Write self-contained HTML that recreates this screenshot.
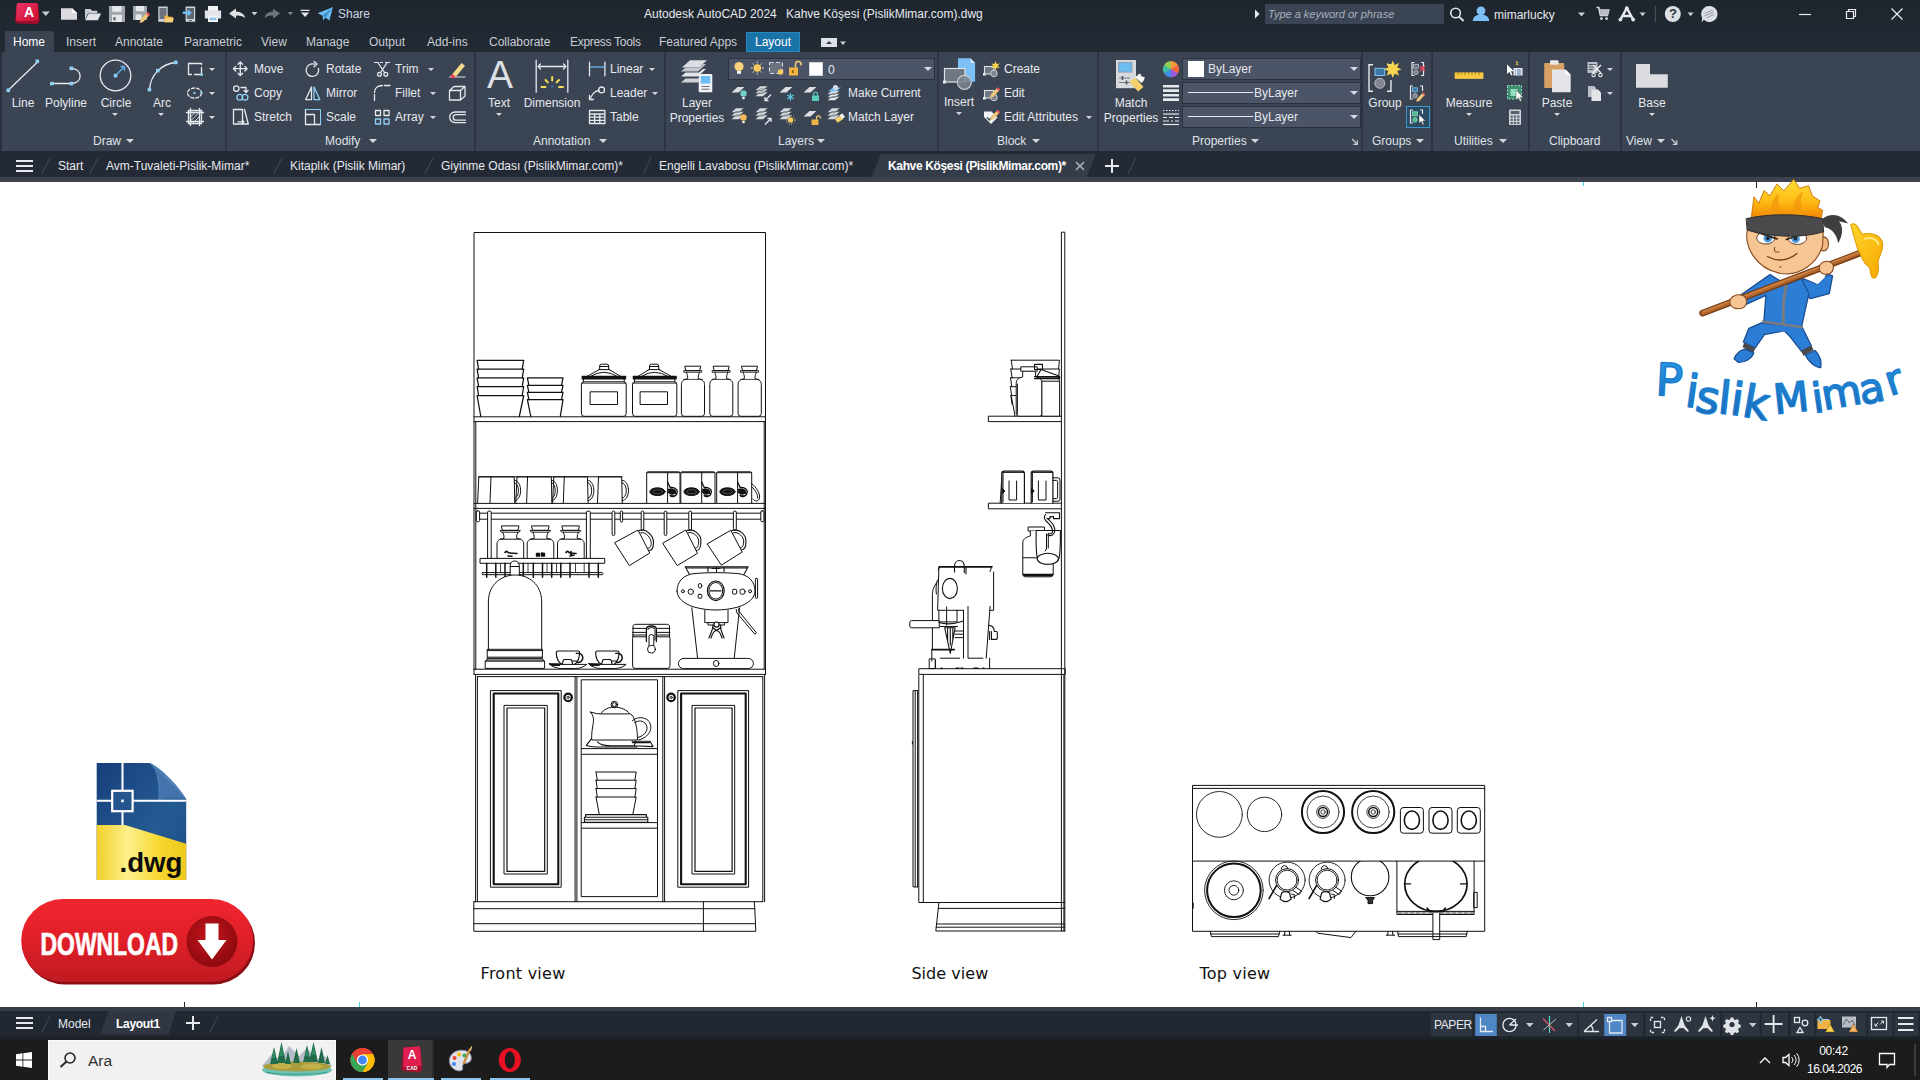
<!DOCTYPE html>
<html lang="en"><head><meta charset="utf-8"><title>Autodesk AutoCAD 2024 - Kahve Köşesi (PislikMimar.com).dwg</title>
<style>
*{box-sizing:border-box;margin:0;padding:0}
html,body{width:1920px;height:1080px;overflow:hidden;background:#fff;font-family:"Liberation Sans",sans-serif;}
#app{position:absolute;left:0;top:0;width:1920px;height:1080px;overflow:hidden;background:#fff}
.abs{position:absolute}
.t{position:absolute;white-space:nowrap;font-size:12px;line-height:14px;color:#e6e9ee;letter-spacing:0}
.tc{transform:translateX(-50%);text-align:center}
#title{position:absolute;left:0;top:0;width:1920px;height:52px;background:linear-gradient(#1e252d,#222a34)}
#ribbon{position:absolute;left:1px;top:52px;width:1919px;height:99px;background:#3b4453}
.sep{position:absolute;top:52px;width:2px;height:99px;background:#2d3542}
.pt{position:absolute;top:134px;font-size:12px;line-height:14px;color:#dfe3e8;white-space:nowrap}
.dd{position:absolute;width:0;height:0;border-left:4px solid transparent;border-right:4px solid transparent;border-top:4px solid #d5d9df}
.dds{position:absolute;width:0;height:0;border-left:3px solid transparent;border-right:3px solid transparent;border-top:3px solid #d5d9df}
.combo{position:absolute;background:#4b5567;border:1px solid #2a323f;height:21px}
#ftabs{position:absolute;left:0;top:151px;width:1920px;height:27px;background:#232a35}
#ftline{position:absolute;left:0;top:177px;width:1920px;height:5px;background:#3c434e}
#canvas{position:absolute;left:0;top:182px;width:1920px;height:825px;background:#fff}
#status{position:absolute;left:0;top:1007px;width:1920px;height:33px;background:#212832;border-top:4px solid #363d48}
#taskbar{position:absolute;left:0;top:1040px;width:1920px;height:40px;background:#1c1c1c}
svg{position:absolute;left:0;top:0;overflow:visible}
</style></head><body><div id="app">
<div id="title"></div>
<div class="abs" style="left:5px;top:31px;width:49px;height:21px;background:#3b4453;border-radius:2px 2px 0 0"></div>
<div class="abs" style="left:746px;top:32px;width:54px;height:20px;background:#1a73a7;border:1px solid #2688be"></div>
<div class="t" style="left:13px;top:35px;color:#fff">Home</div>
<div class="t" style="left:66px;top:35px;color:#c9cdd4">Insert</div>
<div class="t" style="left:115px;top:35px;color:#c9cdd4">Annotate</div>
<div class="t" style="left:184px;top:35px;color:#c9cdd4">Parametric</div>
<div class="t" style="left:261px;top:35px;color:#c9cdd4">View</div>
<div class="t" style="left:306px;top:35px;color:#c9cdd4">Manage</div>
<div class="t" style="left:369px;top:35px;color:#c9cdd4">Output</div>
<div class="t" style="left:427px;top:35px;color:#c9cdd4">Add-ins</div>
<div class="t" style="left:489px;top:35px;color:#c9cdd4">Collaborate</div>
<div class="t" style="left:570px;top:35px;color:#c9cdd4;letter-spacing:-0.3px">Express Tools</div>
<div class="t" style="left:659px;top:35px;color:#c9cdd4">Featured Apps</div>
<div class="t" style="left:755px;top:35px;color:#fff">Layout</div>
<div class="t" style="left:644px;top:7px;color:#e6e9ee">Autodesk AutoCAD 2024</div>
<div class="t" style="left:786px;top:7px;color:#e6e9ee">Kahve Köşesi (PislikMimar.com).dwg</div>
<div class="t" style="left:338px;top:7px;color:#cfd8e6">Share</div>
<div class="abs" style="left:1265px;top:4px;width:179px;height:20px;background:#3b4453"></div>
<div class="t" style="left:1268px;top:7px;color:#a9b0bb;font-style:italic;font-size:11px">Type a keyword or phrase</div>
<div class="t" style="left:1494px;top:8px;color:#e6e9ee">mimarlucky</div>
<div id="ribbon"></div>
<div class="abs" style="left:0;top:52px;width:2px;height:99px;background:#2a313d"></div>
<div class="sep" style="left:225px"></div><div class="sep" style="left:474px"></div><div class="sep" style="left:664px"></div>
<div class="sep" style="left:937px"></div><div class="sep" style="left:1097px"></div><div class="sep" style="left:1361px"></div>
<div class="sep" style="left:1431px"></div><div class="sep" style="left:1528px"></div><div class="sep" style="left:1620px"></div>
<!-- Draw -->
<div class="t tc" style="left:23px;top:96px">Line</div>
<div class="t tc" style="left:66px;top:96px">Polyline</div>
<div class="t tc" style="left:116px;top:96px">Circle</div>
<div class="t tc" style="left:162px;top:96px">Arc</div>
<div class="dds" style="left:112px;top:113px"></div><div class="dds" style="left:158px;top:113px"></div>
<div class="dds" style="left:209px;top:68px"></div><div class="dds" style="left:209px;top:92px"></div><div class="dds" style="left:209px;top:116px"></div>
<div class="pt" style="left:93px">Draw</div><div class="dd" style="left:126px;top:139px"></div>
<!-- Modify -->
<div class="t" style="left:254px;top:62px">Move</div><div class="t" style="left:254px;top:86px">Copy</div><div class="t" style="left:254px;top:110px">Stretch</div>
<div class="t" style="left:326px;top:62px">Rotate</div><div class="t" style="left:326px;top:86px">Mirror</div><div class="t" style="left:326px;top:110px">Scale</div>
<div class="t" style="left:395px;top:62px">Trim</div><div class="t" style="left:395px;top:86px">Fillet</div><div class="t" style="left:395px;top:110px">Array</div>
<div class="dds" style="left:428px;top:68px"></div><div class="dds" style="left:430px;top:92px"></div><div class="dds" style="left:430px;top:116px"></div>
<div class="pt" style="left:325px">Modify</div><div class="dd" style="left:369px;top:139px"></div>
<!-- Annotation -->
<div class="t tc" style="left:499px;top:96px">Text</div><div class="dds" style="left:496px;top:113px"></div>
<div class="t tc" style="left:552px;top:96px">Dimension</div>
<div class="t" style="left:610px;top:62px">Linear</div><div class="t" style="left:610px;top:86px">Leader</div><div class="t" style="left:610px;top:110px">Table</div>
<div class="dds" style="left:649px;top:68px"></div><div class="dds" style="left:652px;top:92px"></div>
<div class="pt" style="left:533px">Annotation</div><div class="dd" style="left:599px;top:139px"></div>
<!-- Layers -->
<div class="t tc" style="left:697px;top:96px">Layer</div><div class="t tc" style="left:697px;top:111px">Properties</div>
<div class="combo" style="left:728px;top:58px;width:207px;height:22px"></div>
<div class="abs" style="left:809px;top:62px;width:14px;height:14px;background:#fff;border:1px solid #cfd3d9"></div>
<div class="t" style="left:828px;top:63px">0</div><div class="dd" style="left:924px;top:67px"></div>
<div class="t" style="left:848px;top:86px">Make Current</div><div class="t" style="left:848px;top:110px">Match Layer</div>
<div class="pt" style="left:778px">Layers</div><div class="dd" style="left:817px;top:139px"></div>
<!-- Block -->
<div class="t tc" style="left:959px;top:95px">Insert</div><div class="dds" style="left:956px;top:112px"></div>
<div class="t" style="left:1004px;top:62px">Create</div><div class="t" style="left:1004px;top:86px">Edit</div><div class="t" style="left:1004px;top:110px">Edit Attributes</div>
<div class="dds" style="left:1086px;top:116px"></div>
<div class="pt" style="left:997px">Block</div><div class="dd" style="left:1032px;top:139px"></div>
<!-- Properties -->
<div class="t tc" style="left:1131px;top:96px">Match</div><div class="t tc" style="left:1131px;top:111px">Properties</div>
<div class="combo" style="left:1182px;top:58px;width:179px;height:22px"></div><div class="combo" style="left:1182px;top:82px;width:179px;height:22px"></div><div class="combo" style="left:1182px;top:106px;width:179px;height:22px"></div>
<div class="abs" style="left:1188px;top:61px;width:16px;height:16px;background:#fff"></div>
<div class="t" style="left:1208px;top:62px">ByLayer</div><div class="t" style="left:1254px;top:86px">ByLayer</div><div class="t" style="left:1254px;top:110px">ByLayer</div>
<div class="abs" style="left:1188px;top:92px;width:65px;height:1px;background:#e6e9ee"></div><div class="abs" style="left:1188px;top:116px;width:65px;height:1px;background:#e6e9ee"></div>
<div class="dd" style="left:1350px;top:67px"></div><div class="dd" style="left:1350px;top:91px"></div><div class="dd" style="left:1350px;top:115px"></div>
<div class="pt" style="left:1192px">Properties</div><div class="dd" style="left:1251px;top:139px"></div>
<!-- Groups -->
<div class="t tc" style="left:1385px;top:96px">Group</div>
<div class="abs" style="left:1406px;top:106px;width:24px;height:22px;background:#2b4a63;border:1px solid #3d96c8"></div>
<div class="pt" style="left:1372px">Groups</div><div class="dd" style="left:1416px;top:139px"></div>
<!-- Utilities -->
<div class="t tc" style="left:1469px;top:96px">Measure</div><div class="dds" style="left:1466px;top:113px"></div>
<div class="pt" style="left:1454px">Utilities</div><div class="dd" style="left:1499px;top:139px"></div>
<!-- Clipboard -->
<div class="t tc" style="left:1557px;top:96px">Paste</div><div class="dds" style="left:1554px;top:113px"></div>
<div class="dds" style="left:1607px;top:68px"></div><div class="dds" style="left:1607px;top:92px"></div>
<div class="pt" style="left:1549px">Clipboard</div>
<!-- View -->
<div class="t tc" style="left:1652px;top:96px">Base</div><div class="dds" style="left:1649px;top:113px"></div>
<div class="pt" style="left:1626px">View</div><div class="dd" style="left:1657px;top:139px"></div>
<svg width="1920" height="181" viewBox="0 0 1920 181">
<defs>
<linearGradient id="alogo" x1="0" y1="0" x2="1" y2="1"><stop offset="0" stop-color="#f0336a"/><stop offset="1" stop-color="#c8102e"/></linearGradient>
</defs>
<!-- ===== title bar / QAT ===== -->
<g>
  <path d="M16.500 5.500L19 3.200H36.500Q38.200 3.200 38.300 5L39.600 21.200L37.500 24.200L17 23.600L15 21.500Z" fill="#9c0e2c"/>
 <path d="M16.600 5Q16.700 3.100 18.600 3.100H35.800Q37.600 3.100 37.700 4.900L38.400 19.400Q38.500 21 36.800 21H17.600Q16 21 16.100 19.400Z" fill="url(#alogo)"/>
 <path d="M41.8 11.5h8l-4 4.5z" fill="#c9cdd4"/>
 <path d="M61 8.3h11.2l4.8 4.6v6.9H61z" fill="#d9dbe0"/><path d="M72.2 8.3v4.6H77z" fill="#fff"/>
 <path d="M85 9h5.5l1.6 1.8h5.2v2.4H88l-3 6.6z" fill="#c9ccd2"/><path d="M88.6 13.6h12.6l-3.4 6.6H85.2z" fill="#e1e3e7"/>
 <path d="M109 6h16v16h-16z" fill="#a1a5ad"/><path d="M112.2 6h9.4v5.8h-9.4z" fill="#e6e8ec"/><path d="M112 14.8h10v7.2h-10z" fill="#e6e8ec"/><path d="M113.5 17h2v3.4h-2z" fill="#555b66"/>
 <path d="M133 6h14v14h-14z" fill="#a1a5ad"/><path d="M135.8 6h8.4v5.2h-8.4z" fill="#e6e8ec"/><path d="M135.6 14.5h6v5.5h-6z" fill="#e6e8ec"/>
 <path d="M140.5 19.5l6.5-7 2.6 2.4-6.6 7-3.4 1z" fill="#f2c879"/><path d="M146 13.5l1.6-1.7 2.6 2.4-1.6 1.7z" fill="#e84b5f"/>
 <path d="M158.3 6.5h9.4v15.3h-9.4z" fill="#cfd2d8"/><path d="M159.5 8h7v11h-7z" fill="#6d727c"/>
 <path d="M164.5 15.5h3.2l1 1.2h4v5.6h-8.2z" fill="#f0b243"/><path d="M165.8 18h8l-1.2 4.3h-8.1z" fill="#f8cf7a"/>
 <path d="M185.6 6.5h9.6v15.3h-9.6z" fill="#cfd2d8"/><path d="M186.8 8h7.2v11h-7.2z" fill="#5f6671"/><path d="M189 20h3v.9h-3z" fill="#555"/>
 <path d="M182.8 11.6h5v-2.4l4 3.6-4 3.6V14h-5z" fill="#6bbdf2"/>
 <path d="M208 6h10v5h-10z" fill="#f0f1f3"/><path d="M204.8 10.5h16.3v8h-16.3z" fill="#e2e4e8"/><path d="M208 15.5h10v6.5h-10z" fill="#f4f5f7"/><path d="M209.6 17.6h6.8v2.6h-6.8z" fill="#8dc4ee"/>
 <path d="M229 13.4l7-5v3c5 .2 8.6 2.6 9.2 6.8-2-2-4.8-2.8-9.2-2.6v3z" fill="#e1e3e7"/>
 <path d="M251.5 12h6l-3 3.4z" fill="#c9cdd4"/>
 <path d="M280 13.4l-7-5v3c-5 .2-8 2.6-8.2 6.8 1.8-2 4.2-2.8 8.2-2.6v3z" fill="#6e747e"/>
 <path d="M287.6 12h5.6l-2.8 3.2z" fill="#7d838d"/>
 <path d="M300.6 9.8h9v1.3h-9zM301 12.6h8.2l-4.1 4.4z" fill="#e1e3e7"/>
 <path d="M317.6 13.2L333 7l-3.6 13.6-4-3.2-2.2 3.2-.6-4.8z" fill="#6bbdf2"/><path d="M322.6 15.8L333 7l-7.6 10.4z" fill="#3e8fc8"/>
 <!-- search etc -->
 <path d="M1255 9.500l4.500 4.500-4.500 4.500z" fill="#e6e9ee"/>
 <circle cx="1455.6" cy="13" r="4.8" fill="none" stroke="#dfe2e7" stroke-width="1.6"/><path d="M1459 16.6l4.6 4.4" stroke="#dfe2e7" stroke-width="2"/>
 <circle cx="1481" cy="10.8" r="4.4" fill="#7cc0f5"/><path d="M1472.8 21c0-4.2 3.4-6.4 8.2-6.4s8.2 2.2 8.2 6.4z" fill="#7cc0f5"/>
 <path d="M1578 12.6h7l-3.5 4z" fill="#c9cdd4"/>
 <path d="M1596.5 7.5h2.3l1.6 8h7l1.4-5.6h-9.4" fill="none" stroke="#dfe2e7" stroke-width="1.5"/><path d="M1600 10h9l-1.4 5.4h-7z" fill="#b9bdc5"/><circle cx="1601.4" cy="18.6" r="1.4" fill="#dfe2e7"/><circle cx="1606.6" cy="18.6" r="1.4" fill="#dfe2e7"/>
 <path d="M1620.4 19.6l6.4-11.4 6.4 11.4M1623 16h7.6" fill="none" stroke="#e6e9ee" stroke-width="2.4" stroke-linejoin="round"/><circle cx="1626.8" cy="8.2" r="1.9" fill="#e6e9ee"/><circle cx="1620.4" cy="19.6" r="1.9" fill="#e6e9ee"/><circle cx="1633.2" cy="19.6" r="1.9" fill="#e6e9ee"/>
 <path d="M1639.6 12.6h6l-3 3.6z" fill="#c9cdd4"/>
 <path d="M1655.4 5.5v17" stroke="#4a515c" stroke-width="1"/>
 <circle cx="1672.8" cy="14" r="8" fill="#dcdfe4"/>
 <path d="M1687.6 12.6h6l-3 3.6z" fill="#c9cdd4"/>
 <path d="M1709.5 6a8 8 0 1 1-5.5 13.800l-2.400 2.400l.6-4.400A8 8 0 0 1 1709.500 6z" fill="#dcdfe4"/><path d="M1704.500 13.500l8-3.500M1704.500 16l9-4M1706.500 17.800l7.500-3.300" stroke="#8d929b" stroke-width="0.900"/>
 <path d="M1799 14.500h12" stroke="#e6e9ee" stroke-width="1.200"/>
 <path d="M1846.500 11.500h7v7h-7zM1848.500 11.500v-2h7v7h-2" fill="none" stroke="#e6e9ee" stroke-width="1.200"/>
 <path d="M1891.500 8.500l11 11M1902.500 8.500l-11 11" stroke="#e6e9ee" stroke-width="1.300"/>
 <!-- workspace switch after Layout tab -->
 <rect x="821" y="38" width="16" height="9" fill="#dfe2e7"/><path d="M826 44l3-3 3 3z" fill="#333a46"/><path d="M840 41.500h6l-3 3.500z" fill="#c9cdd4"/>
</g>
<!-- ===== Draw panel ===== -->
<g fill="none" stroke="#e6e9ee" stroke-width="1.300" stroke-linecap="round">
 <path d="M9 89.500L37 62.500"/>
 <path d="M52 83.500H71M71.500 68.500C83 68.500 83 83.500 71.500 83.500"/>
 <circle cx="115.500" cy="75.500" r="15.300"/>
 <path d="M149.500 89.500C150.500 75 161 64 175.500 62.500"/>
 <path d="M188.500 63.500H201.500V74.500H188.500Z" stroke-dasharray="14 3"/>
 <ellipse cx="194.500" cy="93" rx="7" ry="5" stroke-dasharray="3 2"/>
 <path d="M188.500 110.500H201.500V123.500H188.500ZM186.500 112.500H203.500M186.500 121.500H203.500M190.500 108.500V125.500M199.500 108.500V125.500"/>
 <path d="M189.500 122l10-10M189.500 118l6-6M193.500 122.500l6.500-6.500" stroke-width="0.900"/>
</g>
<g fill="#8fd0f5">
 <rect x="6.500" y="88.500" width="3.600" height="3.600"/><rect x="35.500" y="59.500" width="3.600" height="3.600"/>
 <rect x="50" y="81.800" width="3.600" height="3.600"/><rect x="69.500" y="81.800" width="3.600" height="3.600"/><rect x="69.500" y="66.500" width="3.600" height="3.600"/>
 <rect x="113.800" y="73.800" width="3.600" height="3.600"/>
 <rect x="147.600" y="87.800" width="3.600" height="3.600"/><rect x="156" y="68.800" width="3.600" height="3.600"/><rect x="174" y="60.600" width="3.600" height="3.600"/>
 <rect x="200.500" y="73.500" width="2.400" height="2.400"/><circle cx="194.500" cy="93" r="1.200"/><circle cx="201.500" cy="93" r="1.200"/>
</g>
<path d="M116 75l8.500-8.500M124.500 66.500h-4.200M124.500 66.500v4.200" stroke="#5fb2ea" stroke-width="1.400" fill="none"/>
<!-- ===== Modify panel ===== -->
<g fill="none" stroke="#e6e9ee" stroke-width="1.300" stroke-linecap="round" stroke-linejoin="round">
 <path d="M233.500 68.700h13.600M240.300 61.900v13.600M235.800 66.400l-2.300 2.300 2.300 2.300M244.800 66.400l2.300 2.300-2.300 2.300M238 64.200l2.300-2.300 2.300 2.300M238 73.200l2.300 2.300 2.300-2.300"/>
 <circle cx="236.300" cy="88.600" r="2.700"/><path d="M241 87.500h5v5M244 90.500l2 2 2-2"/>
 <path d="M233.500 109.500h9v14.500h-9zM244.500 109.500l3.800 14.500h-5.300M238 121.800h5.500M242 120l2 1.800-2 1.800"/>
 <path d="M318.500 68.500A6.300 6.300 0 1 1 314.500 64.200M314 61.500l3 2.600-3 2.600"/>
 <path d="M311.500 87l-5.800 12.600h5.800z"/>
 <path d="M305.500 124.500v-15M305.500 124.500h15M305.500 114.500h9v10"/>
 <path d="M374.500 62.500h4M380.500 62.500h2M385.500 62.500h4" stroke-width="1.100"/>
 <path d="M378.500 63.500l6 9M386.500 63.500l-6 9"/><circle cx="379.500" cy="74.300" r="1.900"/><circle cx="385.800" cy="74.300" r="1.900"/>
 <path d="M374.500 100.500v-6M374.500 92.500C374.500 88 378 85.500 382.500 85.500M384.500 85.500h5.500" />
 <path d="M375.500 110.500h5v5h-5zM384 110.500h5v5h-5z"/>
 <path d="M449.500 77h15.500" stroke-width="1.100"/>
 <path d="M449.500 90.500h11v9.500h-11zM449.500 90.500l4.500-4h11l-4.500 4M465 86.500v9.500l-4.500 4"/>
 <path d="M465.500 112h-10.500a5.300 5.300 0 0 0 0 10.600h10.500M465.500 114.600h-9.500a2.800 2.800 0 0 0 0 5.600h9.500"/>
</g>
<g fill="none" stroke="#8fd0f5" stroke-width="1.300" stroke-linejoin="round">
 <circle cx="239.800" cy="97.300" r="2.900"/><circle cx="245" cy="97.300" r="2.900"/>
 <path d="M314 87l5.800 12.600h-5.800z"/>
 <path d="M305.500 109.500h15v15" stroke-width="1"/>
 <path d="M375.500 119h5v5h-5zM384 119h5v5h-5z"/>
</g>
<path d="M452 74.500l9.500-11.500 3.500 2.800-9.500 11.500z" fill="#f3d98a"/><path d="M450.600 75.600l1.400-1.800 3.500 2.800-1.400 1.600c-1.600.6-3.600-.6-3.500-2.600z" fill="#e8455a"/>
<!-- ===== Annotation ===== -->
<g fill="none" stroke="#e6e9ee" stroke-width="1.300" stroke-linecap="round" stroke-linejoin="round">
 <path d="M536.200 60.200v32M567.800 60.200v32M538 66.500h28M540.500 64l-2.500 2.500 2.500 2.500M563.500 64l2.500 2.500-2.500 2.500"/>
 <path d="M589.500 62.200v13.600M604.900 62.200v13.600"/>
 <circle cx="601.600" cy="89.900" r="2.900"/><path d="M598.800 90.500C594 91 592 95 590 99M589.500 95.500v4h4"/>
 <path d="M589.500 110.500h15.400v13h-15.400zM589.500 114h15.400M589.500 117.200h15.400M589.500 120.400h15.400M594.600 114v9.500M599.800 114v9.500"/>
</g>
<path d="M590 67h14.500" stroke="#5fb2ea" stroke-width="1.400"/>
<g stroke="#f5e25a" stroke-width="2" stroke-linecap="round"><path d="M552.200 77v3.600M545.500 80l2.400 2.400M559 80l-2.400 2.400M541.500 87h4M563 87h-4"/></g>
<circle cx="552.200" cy="86.500" r="1.300" fill="#3a6fb0"/>
<!-- ===== Layers ===== -->
<g>
 <path d="M690 60.200h17l-8 7.200h-17z" fill="#dcdee2"/><path d="M681 71.500l4.500-4h13.500l4-3.500h3l-8 7.500z" fill="#c4c7cd"/><path d="M681 76.500l4.500-4h13.500l4-3.500h3l-8 7.500z" fill="#e4e6ea"/><path d="M681 82.500l4.500-4h13.500l4-3.500h3l-8 7.500z" fill="#cfd2d7"/>
 <rect x="698.700" y="74" width="13.600" height="18.200" rx="1.200" fill="#f1f2f4"/><rect x="700.700" y="76" width="9.600" height="7.600" fill="#6bbdf2"/><path d="M701.500 86.500h8M701.500 89.200h8" stroke="#5a6270" stroke-width="0.900"/>
 <circle cx="739" cy="66.500" r="4.600" fill="#f8d37a"/><path d="M737 71h4v2.800h-4z" fill="#f4f4f4"/>
 <circle cx="757.300" cy="68" r="3.800" fill="#f9cc63"/><g stroke="#f9e3a4" stroke-width="1"><path d="M757.300 61.500v1.800M757.300 72.700v1.800M750.800 68h1.800M762 68h1.800M752.700 63.400l1.300 1.300M760.600 71.300l1.300 1.300M752.700 72.600l1.300-1.300M760.600 64.700l1.300-1.300"/></g>
 <path d="M769.500 62.500h13v11h-13z" fill="#6b7280" stroke="#dfe2e7" stroke-width="1" stroke-dasharray="4 2.500"/><circle cx="780.500" cy="72" r="2.800" fill="#f9cc63"/>
 <path d="M789 67.500h9v8h-9z" fill="#f2b544"/><path d="M795.500 67.500v-3.300a2.800 2.800 0 0 1 5.600 0v1.300" fill="none" stroke="#f7d173" stroke-width="1.500"/><path d="M792.800 70v3" stroke="#7a5714" stroke-width="1.400"/>
</g>
<g id="lyr2">
 <path d="M731.500 92.500l6-5.500h7l-6 5.500z" fill="#dcdee2"/><circle cx="743.500" cy="93.500" r="3.200" fill="#73d0c8"/><path d="M742.300 97h2.400v2.200h-2.400z" fill="#f4f4f4"/>
 <path d="M755 90.500l5-4.500h8l-5 4.500zM755 93.500l5-4.500h8l-5 4.500zM755 96.500l5-4.500h8l-5 4.500z" fill="#d5d8dd" stroke="#3b4453" stroke-width="0.500"/><path d="M771 94.500l-6 6M765 97v3.500h3.500" stroke="#e6e9ee" stroke-width="1.300" fill="none"/>
 <path d="M779.500 92.500l6-5.500h7l-6 5.500z" fill="#dcdee2"/><g stroke="#5fc8e8" stroke-width="1.200"><path d="M790.500 93.200v7.600M787.200 95.100l6.600 3.800M787.200 98.900l6.600-3.800"/></g>
 <path d="M803.500 92.500l6-5.500h7l-6 5.500z" fill="#dcdee2"/><path d="M812 95.500h7v5.500h-7z" fill="#59cdb8"/><path d="M813.600 95.500v-1.600a1.900 1.900 0 0 1 3.800 0v1.600" fill="none" stroke="#59cdb8" stroke-width="1.200"/>
 <path d="M827 94.500l5-4h8l-5 4zM827 97.500l5-4h8l-5 4zM827 100.500l5-4h8l-5 4z" fill="#e4e6ea" stroke="#3b4453" stroke-width="0.500"/><path d="M828 91.500l5-4h8l-5 4z" fill="#6bbdf2"/><circle cx="835.500" cy="87.500" r="2.600" fill="#d9dbe0"/>
</g>
<g id="lyr3">
 <path d="M731 112.500l5-4.500h8l-5 4.500zM731 116l5-4.500h8l-5 4.500zM731 119.500l5-4.500h8l-5 4.500z" fill="#d5d8dd" stroke="#3b4453" stroke-width="0.500"/><circle cx="743.500" cy="117.500" r="3.200" fill="#f5b95a"/><path d="M742.300 121h2.400v2.200h-2.400z" fill="#f4f4f4"/>
 <path d="M755 112.500l5-4.500h8l-5 4.500zM755 116l5-4.500h8l-5 4.500zM755 119.500l5-4.500h8l-5 4.500z" fill="#d5d8dd" stroke="#3b4453" stroke-width="0.500"/><path d="M765 124.500l6-6M767.500 118.500h3.500v3.500" stroke="#e6e9ee" stroke-width="1.300" fill="none"/>
 <path d="M779 112.500l5-4.500h8l-5 4.500zM779 116l5-4.500h8l-5 4.500zM779 119.500l5-4.500h8l-5 4.500z" fill="#d5d8dd" stroke="#3b4453" stroke-width="0.500"/><circle cx="790.500" cy="120" r="2.700" fill="#f9cc63"/><g stroke="#f9e3a4" stroke-width="0.900" stroke-dasharray="1 1.500"><circle cx="790.500" cy="120" r="4.300" fill="none"/></g>
 <path d="M803.500 116.500l6-5.500h7l-6 5.500z" fill="#dcdee2"/><path d="M811.500 119.500h7v5.500h-7z" fill="#f2b544"/><path d="M816.500 119.500v-1.800a1.900 1.900 0 0 1 3.800 0v.8" fill="none" stroke="#f7d173" stroke-width="1.200"/>
 <path d="M827 112.500l5-4.500h8l-5 4.500zM827 116l5-4.500h8l-5 4.500zM827 119.500l5-4.500h8l-5 4.500z" fill="#d5d8dd" stroke="#3b4453" stroke-width="0.500"/><path d="M835 119l5.500-3.500 2.500 3.800-5.500 3.500z" fill="#f3d069"/><path d="M839.500 115l3-1.500 2.500 3.500-2.500 2z" fill="#f4f4f4"/>
</g>
<!-- ===== Block ===== -->
<g>
 <path d="M958 58.300h12.500l4.600 4.600v18.800H958z" fill="#7cc0f5"/><path d="M970.500 58.300v4.600h4.600z" fill="#cfe6f8"/>
 <rect x="944.500" y="68.500" width="20.500" height="13.500" fill="#6f7783" stroke="#dfe2e7" stroke-width="1.200"/><rect x="943" y="80.500" width="3" height="3" fill="#e6e9ee"/>
 <circle cx="964.400" cy="82.300" r="7" fill="#7d848f" fill-opacity="0.850" stroke="#c9cdd4" stroke-width="1.200"/>
 <g id="blk1"><rect x="984.500" y="66.500" width="9.500" height="7.500" fill="#6f7783" stroke="#dfe2e7" stroke-width="1.100"/><rect x="983" y="73" width="2.600" height="2.600" fill="#e6e9ee"/><circle cx="994" cy="73.500" r="3.300" fill="#7d848f" stroke="#c9cdd4" stroke-width="1"/></g>
 <path d="M995.500 61l1.200 3 3-.6-2 2.300 2 2.300-3-.6-1.200 3-1.200-3-3 .6 2-2.300-2-2.300 3 .6z" fill="#f9d54e"/>
 <g><rect x="984.500" y="90.500" width="9.500" height="7.500" fill="#6f7783" stroke="#dfe2e7" stroke-width="1.100"/><rect x="983" y="97" width="2.600" height="2.600" fill="#e6e9ee"/><circle cx="994" cy="97.500" r="3.300" fill="#7d848f" stroke="#c9cdd4" stroke-width="1"/></g>
 <path d="M991 94.500l6.500-7 2.400 2.200-6.500 7-3.200 1z" fill="#f2c879"/><path d="M996.400 88.700l1.300-1.400 2.400 2.200-1.300 1.400z" fill="#e84b5f"/>
 <path d="M984 111.500h7.500l6 6-6.500 6.500-7-7z" fill="#f1f2f4"/><path d="M987 117.500l2.500 2.500 4-4.500" stroke="#3b4453" stroke-width="1.400" fill="none"/>
 <path d="M991 117l6.500-7 2.400 2.200-6.500 7-3.200 1z" fill="#f2c879"/><path d="M996.400 111.200l1.300-1.400 2.400 2.200-1.300 1.400z" fill="#e84b5f"/>
</g>
<!-- ===== Properties ===== -->
<g>
 <rect x="1116" y="60" width="20" height="28.200" fill="#d8dade"/><rect x="1118.400" y="62.300" width="13.600" height="9.800" fill="#6bbdf2" stroke="#9097a2" stroke-width="0.800"/>
 <path d="M1119 78h11M1119 82.500h11" stroke="#6a717d" stroke-width="0.900"/><path d="M1122.500 76v4M1126.500 80.500v4" stroke="#4d545f" stroke-width="1.600"/>
 <path d="M1129.500 82l5.500-4.500 8.500 9.500-5.500 4.500z" fill="#f3d069"/><path d="M1135 77.500l4-3.500c1.500-.5 2.500.5 2 2l4 1.500-1.500 3.500-2 2z" fill="#f4f4f4"/>
 <circle cx="1171" cy="69.300" r="8" fill="#e94e77"/>
 <path d="M1171 69.300L1171 61.300A8 8 0 0 1 1177.900 65.300z" fill="#f79a3c"/><path d="M1171 69.300L1177.900 65.300A8 8 0 0 1 1177.900 73.300z" fill="#f2663a"/><path d="M1171 69.300L1177.900 73.300A8 8 0 0 1 1171 77.300z" fill="#9a5de0"/><path d="M1171 69.300L1171 77.300A8 8 0 0 1 1164.100 73.300z" fill="#3f8fe8"/><path d="M1171 69.300L1164.100 73.300A8 8 0 0 1 1164.100 65.300z" fill="#35c0a6"/><path d="M1171 69.300L1164.100 65.300A8 8 0 0 1 1171 61.300z" fill="#8fd14f"/>
 <path d="M1163 86.200h16M1163 90.600h16M1163 95.200h16M1163 99.600h16" stroke="#e6e9ee" stroke-width="2.600"/>
 <path d="M1163 110.500h16" stroke="#e6e9ee" stroke-width="1.200" stroke-dasharray="1.500 1.500"/><path d="M1163 114h16" stroke="#e6e9ee" stroke-width="1.200"/><path d="M1163 117.500h16" stroke="#e6e9ee" stroke-width="1.200" stroke-dasharray="4 2"/><path d="M1163 121h16" stroke="#e6e9ee" stroke-width="1.200" stroke-dasharray="6 2 2 2"/><path d="M1163 124.500h16" stroke="#e6e9ee" stroke-width="1.200"/>
 <path d="M1352 139l5 5M1357.300 140.300v4h-4" stroke="#c9cdd4" stroke-width="1.200" fill="none"/>
</g>
<!-- ===== Groups ===== -->
<g>
 <path d="M1373 64.700h-4v26.600h4M1387 64.700h4v5M1391 80v11.300h-4" fill="none" stroke="#e6e9ee" stroke-width="1.400"/>
 <rect x="1375" y="68.300" width="9.800" height="7.200" fill="#3b78a8" stroke="#7fc3ee" stroke-width="1"/><circle cx="1379.800" cy="83.300" r="5" fill="#80858f" stroke="#b9bdc5" stroke-width="1"/>
 <path d="M1392.800 60.500l1.800 4.400 4.400-1.800-1.800 4.400 4.400 1.800-4.400 1.800 1.800 4.400-4.400-1.800-1.800 4.400-1.800-4.400-4.400 1.800 1.800-4.400-4.400-1.800 4.400-1.800-1.800-4.400 4.400 1.800z" fill="#f9d54e"/>
 <path d="M1414.500 62.500h-2.500v13h2.500M1421 62.500h2.500v13h-2.500" fill="none" stroke="#e6e9ee" stroke-width="1.200"/><rect x="1413.500" y="64.300" width="5" height="4" fill="#6f7783" stroke="#b9bdc5" stroke-width="0.800"/><circle cx="1416" cy="72.300" r="2.300" fill="#80858f" stroke="#b9bdc5" stroke-width="0.800"/><path d="M1420 66l5 5M1425 66l-5 5" stroke="#f0455a" stroke-width="1.600"/>
 <path d="M1413 86h-2.500v13h2.500M1420 86h2.500v5" fill="none" stroke="#e6e9ee" stroke-width="1.200"/><rect x="1412.500" y="87.800" width="5" height="4" fill="#3b78a8" stroke="#7fc3ee" stroke-width="0.800"/><circle cx="1415" cy="95.800" r="2.300" fill="#80858f" stroke="#b9bdc5" stroke-width="0.800"/><path d="M1417 99l6-6.500 2.200 2-6 6.500-3 .8z" fill="#f2c879"/><path d="M1422 93.500l1.200-1.300 2.200 2-1.200 1.300z" fill="#e84b5f"/>
 <path d="M1413 110h-2.500v13h2.500M1420 110h2.500v4" fill="none" stroke="#e6e9ee" stroke-width="1.200"/><rect x="1412.500" y="111.800" width="5" height="4" fill="#4fb58a" stroke="#8fe0bd" stroke-width="0.800"/><circle cx="1415" cy="119.800" r="2.300" fill="#4fb58a" stroke="#8fe0bd" stroke-width="0.800"/><path d="M1419 114.500v9l2.200-2 1.600 3.400 1.400-.7-1.600-3.300h3z" fill="#fff" stroke="#333" stroke-width="0.500"/>
</g>
<!-- ===== Utilities ===== -->
<g>
 <rect x="1454.700" y="72.400" width="28.700" height="6.500" fill="#f5c842"/><path d="M1458 72.400v2.600M1461.500 72.400v2M1465 72.400v2.600M1468.500 72.400v2M1472 72.400v2.600M1475.500 72.400v2M1479 72.400v2.600" stroke="#8a6a10" stroke-width="0.800"/>
 <path d="M1507 64.500v9.500l2.400-2.200 1.700 3.600 1.500-.7-1.700-3.500h3.200z" fill="#fff"/><rect x="1513.500" y="68" width="9" height="7.500" fill="#e8eaee"/><path d="M1515 70h1M1517 70h4M1515 72h1M1517 72h4M1515 74h1M1517 74h4" stroke="#3f6ea8" stroke-width="0.900"/><path d="M1515 60.500l3.500 2-1.500 1.500 2.500 1.500-4-1 1.500-1.500z" fill="#f9d54e"/>
 <rect x="1507.500" y="85.500" width="14" height="13.500" fill="#3f8f6e" stroke="#8fe0bd" stroke-width="1" stroke-dasharray="2 1.500"/><path d="M1510.500 89h7v7h-7z" fill="#8fe0bd"/><path d="M1516 90v10l2.400-2.200 1.700 3.600 1.500-.7-1.700-3.500h3.200z" fill="#fff" stroke="#333" stroke-width="0.400"/>
 <rect x="1509" y="109.500" width="12" height="15.500" rx="1" fill="#cfd2d8"/><rect x="1510.600" y="111" width="8.800" height="3" fill="#5a6270"/><g fill="#5a6270"><rect x="1510.600" y="115.500" width="2.200" height="2.200"/><rect x="1513.900" y="115.500" width="2.200" height="2.200"/><rect x="1517.200" y="115.500" width="2.200" height="2.200"/><rect x="1510.600" y="118.700" width="2.200" height="2.200"/><rect x="1513.900" y="118.700" width="2.200" height="2.200"/><rect x="1517.200" y="118.700" width="2.200" height="2.200"/><rect x="1510.600" y="121.900" width="2.200" height="2.200"/><rect x="1513.900" y="121.900" width="2.200" height="2.200"/><rect x="1517.200" y="121.900" width="2.200" height="2.200"/></g>
</g>
<!-- ===== Clipboard ===== -->
<g>
 <rect x="1544.200" y="63" width="20" height="25" rx="1" fill="#d9a066"/><rect x="1550" y="60.300" width="8.500" height="4.500" rx="1" fill="#e6e8ec"/>
 <path d="M1552 69.500h13.500l5.200 5.200v17.500H1552z" fill="#e3e5e9"/><path d="M1565.500 69.500v5.200h5.200z" fill="#fff"/>
 <rect x="1587.500" y="62" width="10" height="11" fill="#b9bdc5"/><path d="M1589 64.500h7M1589 67h7M1589 69.500h4" stroke="#4a515c" stroke-width="1"/><path d="M1593 65l8 8M1601 65l-8 8" stroke="#f1f2f4" stroke-width="1.400"/><circle cx="1593.600" cy="75" r="1.700" fill="none" stroke="#f1f2f4" stroke-width="1.100"/><circle cx="1600.400" cy="75" r="1.700" fill="none" stroke="#f1f2f4" stroke-width="1.100"/>
 <path d="M1588 86h6l2 2v9h-8z" fill="#b9bdc5"/><path d="M1591.500 89.500h6.500l3 3v8.500h-9.500z" fill="#e3e5e9"/>
</g>
<!-- ===== View ===== -->
<g>
 <path d="M1636 64h14v10.200h17.800v13.600H1636z" fill="#dcdde0"/>
 <path d="M1671.500 139l5 5M1676.800 140.300v4h-4" stroke="#c9cdd4" stroke-width="1.200" fill="none"/>
</g>
</svg>
<div class="abs" style="left:23px;top:4px;width:12px;height:16px;font:bold 14px/16px 'Liberation Sans',sans-serif;color:#fff;text-align:center">A</div>
<div class="abs" style="left:486px;top:55px;width:28px;height:40px;font:39px/40px 'Liberation Sans',sans-serif;color:#dcdfe4;text-align:center">A</div>
<div class="abs" style="left:1667px;top:6px;width:12px;height:16px;font:bold 13px/16px 'Liberation Sans',sans-serif;color:#2a313d;text-align:center">?</div>
<div id="ftabs"></div><div id="ftline"></div>
<svg width="1920" height="181" viewBox="0 0 1920 181">
<polygon points="871.500,177 881,154 1096,154 1086.500,177" fill="#343c49"/>
<g stroke="#e6e9ee" stroke-width="2"><path d="M16 161h17M16 166h17M16 171h17"/></g>
<g stroke="#3d444f" stroke-width="1.2" fill="none"><path d="M42 174l8-16M90 174l8-16M274 174l8-16M425 174l8-16M643 174l8-16M1128 174l8-16"/></g>
<g stroke="#aab0b9" stroke-width="1.6"><path d="M1076 162l8 8M1084 162l-8 8"/></g>
<g stroke="#e6e9ee" stroke-width="2"><path d="M1105 166h14M1112 159v14"/></g>
</svg>
<div class="t" style="left:58px;top:159px">Start</div>
<div class="t" style="left:106px;top:159px">Avm-Tuvaleti-Pislik-Mimar*</div>
<div class="t" style="left:290px;top:159px">Kitaplık (Pislik Mimar)</div>
<div class="t" style="left:441px;top:159px">Giyinme Odası (PislikMimar.com)*</div>
<div class="t" style="left:659px;top:159px">Engelli Lavabosu (PislikMimar.com)*</div>
<div class="t" style="left:888px;top:159px;font-weight:bold;color:#fff;letter-spacing:-0.35px">Kahve Köşesi (PislikMimar.com)*</div>
<div id="canvas"></div>
<svg width="1920" height="1080" viewBox="0 0 1920 1080">
<g fill="none" stroke="#111" stroke-width="1" stroke-linejoin="round" stroke-linecap="round">
<g id="front">
<path d="M474 669.5V232.5H765.5V669.5" />
<path d="M475.8 421.5V669.5M764.2 421.5V669.5" />
<path d="M474 416.8H765.5M474 421.6H765.5" />
<path d="M474 503.4H765.5M474 508.4H765.5" />
<path d="M477.1 360.4H523.7L522.2 369.1M477.1 360.4L478.6 369.1"  stroke-width="1.25"/>
<path d="M477.1 369.1H523.7L522.2 377.8M477.1 369.1L478.6 377.8"  stroke-width="1.25"/>
<path d="M477.1 377.8H523.7L522.2 386.5M477.1 377.8L478.6 386.5"  stroke-width="1.25"/>
<path d="M477.1 386.5H523.7L522.2 395.5M477.1 386.5L478.6 395.5"  stroke-width="1.25"/>
<path d="M477.1 395.5H523.7L519.3 416.5M477.1 395.5L480.8 416.5"  stroke-width="1.25"/>
<path d="M527.4 377.8H563L561.5 385.4M527.4 377.8L528.9 385.4"  stroke-width="1.25"/>
<path d="M527.4 385.4H563L561.5 392.4M527.4 385.4L528.9 392.4"  stroke-width="1.25"/>
<path d="M527.4 392.4H563L561.5 399.7M527.4 392.4L528.9 399.7"  stroke-width="1.25"/>
<path d="M527.4 399.7H563L560.3 416.5M527.4 399.7L530.8 416.5"  stroke-width="1.25"/>
<path d="M581.4 384.5Q581.4 381.8 583.9 381.8H623.7Q626.2 381.8 626.2 384.5V413.5Q626.2 416.3 623.7 416.3H583.9Q581.4 416.3 581.4 413.5Z" />
<path d="M581.9 383.2H625.7"  stroke-width="0.8"/>
<path d="M582.1999999999999 376.4H625.6V378.8H582.1999999999999ZM582.1999999999999 377.6H625.6"  stroke-width="1.2"/>
<path d="M583.4 378.8V381.8M624.2 378.8V381.8" />
<path d="M586.9 376.4L599.2 369.6M620.7 376.4L609.2 369.6M590.4 376.4Q603.8 368 617.2 376.4" />
<path d="M599.7 369.6V366Q599.7 364.2 601.5 364.2H606.9000000000001Q608.7 364.2 608.7 366V369.6M598.9000000000001 369.6H609.5M599.7 366.5H608.7" />
<rect x="590.5" y="391.8" width="27.0" height="12.7"/>
<path d="M632.5 384.5Q632.5 381.8 635.0 381.8H674.3Q676.8 381.8 676.8 384.5V413.5Q676.8 416.3 674.3 416.3H635.0Q632.5 416.3 632.5 413.5Z" />
<path d="M633.0 383.2H676.3"  stroke-width="0.8"/>
<path d="M633.3 376.4H676.1999999999999V378.8H633.3ZM633.3 377.6H676.1999999999999"  stroke-width="1.2"/>
<path d="M634.5 378.8V381.8M674.8 378.8V381.8" />
<path d="M638.0 376.4L649.0 369.6M671.3 376.4L659.2 369.6M641.5 376.4Q654.65 368 667.8 376.4" />
<path d="M649.5 369.6V366Q649.5 364.2 651.3 364.2H656.9000000000001Q658.7 364.2 658.7 366V369.6M648.7 369.6H659.5M649.5 366.5H658.7" />
<rect x="640.5" y="391.8" width="27.0" height="12.7"/>
<path d="M685.1500000000001 366.2H700.75L699.75 370.59999999999997H686.1500000000001Z" />
<path d="M684.1500000000001 370.59999999999997H701.75V372.2H684.1500000000001Z"  stroke-width="0.9"/>
<path d="M686.6500000000001 372.2C686.6500000000001 374.2 687.6500000000001 375.2 687.6500000000001 377.2V378.59999999999997C683.45 379.59999999999997 681.4 380.8 681.4 384.59999999999997V413.5Q681.4 416.3 684.1999999999999 416.3H701.7Q704.5 416.3 704.5 413.5V384.59999999999997C704.5 380.8 702.45 379.59999999999997 698.25 378.59999999999997V377.2C698.25 375.2 699.25 374.2 699.25 372.2" />
<path d="M683.75 379.4H702.1500000000001"  stroke-width="0.8"/>
<path d="M713.5 366.2H729.0999999999999L728.0999999999999 370.59999999999997H714.5Z" />
<path d="M712.5 370.59999999999997H730.0999999999999V372.2H712.5Z"  stroke-width="0.9"/>
<path d="M715.0 372.2C715.0 374.2 716.0 375.2 716.0 377.2V378.59999999999997C711.8 379.59999999999997 709.8 380.8 709.8 384.59999999999997V413.5Q709.8 416.3 712.5999999999999 416.3H730.0Q732.8 416.3 732.8 413.5V384.59999999999997C732.8 380.8 730.8 379.59999999999997 726.5999999999999 378.59999999999997V377.2C726.5999999999999 375.2 727.5999999999999 374.2 727.5999999999999 372.2" />
<path d="M712.0999999999999 379.4H730.5"  stroke-width="0.8"/>
<path d="M741.9000000000001 366.2H757.5L756.5 370.59999999999997H742.9000000000001Z" />
<path d="M740.9000000000001 370.59999999999997H758.5V372.2H740.9000000000001Z"  stroke-width="0.9"/>
<path d="M743.4000000000001 372.2C743.4000000000001 374.2 744.4000000000001 375.2 744.4000000000001 377.2V378.59999999999997C740.2 379.59999999999997 738.1 380.8 738.1 384.59999999999997V413.5Q738.1 416.3 740.9 416.3H758.5Q761.3 416.3 761.3 413.5V384.59999999999997C761.3 380.8 759.2 379.59999999999997 755.0 378.59999999999997V377.2C755.0 375.2 756.0 374.2 756.0 372.2" />
<path d="M740.5 379.4H758.9000000000001"  stroke-width="0.8"/>
<path d="M479 476.8H622" />
<path d="M478.8 476.8H491M478.8 476.8L477.6 503" />
<path d="M491 476.8H514.2L514.8000000000001 503M491 476.8L490 503" />
<path d="M514.4000000000001 480.3C522.8 480.3 522.8 500.5 514.7 500.5M514.5 482.8C519.8 483.3 519.8 498 514.7 498" />
<path d="M517.0 476.8H527.6M517.0 476.8L515.8 503" />
<path d="M527.6 476.8H551.3L551.9 503M527.6 476.8L526.6 503" />
<path d="M551.5 480.3C559.5 480.3 559.5 500.5 551.8 500.5M551.5999999999999 482.8C556.5 483.3 556.5 498 551.8 498" />
<path d="M553.8000000000001 476.8H564.3M553.8000000000001 476.8L552.6 503" />
<path d="M564.3 476.8H587.5L588.1 503M564.3 476.8L563.3 503" />
<path d="M587.7 480.3C596 480.3 596 500.5 588.0 500.5M587.8 482.8C593 483.3 593 498 588.0 498" />
<path d="M598.5 476.8H621.7L622.3000000000001 503M598.5 476.8L597.5 503" />
<path d="M621.9000000000001 480.3C630.8 480.3 630.8 500.5 622.2 500.5M622.0 482.8C627.8 483.3 627.8 498 622.2 498" />
<path d="M646.7 502.6V473.0Q646.7 471.8 647.9000000000001 471.8H678.8Q680 471.8 680 473.0V502.6M667.6 472.6V502.6M647.2 472.7H679.5" />
<ellipse cx="657.45" cy="491.7" rx="7.6" ry="3.9" fill="#111"/>
<ellipse cx="657.45" cy="491.7" rx="5" ry="2" stroke="#666" stroke-width="0.7"/>
<path d="M667.6 482L670.1 487.5C673.6 487 678.1 489 677.1 492.5C676.6 497 671.6 497.5 670.1 495.5M668.6 489.5C672.6 488.5 676.1 490.5 675.6 493.5" stroke-width="1.3"/>
<ellipse cx="671.9" cy="491.6" rx="3.6" ry="2.6" fill="#111"/>
<path d="M670.6 495.3H675.1" />
<path d="M680.8 502.6V473.0Q680.8 471.8 682.0 471.8H713.8Q715 471.8 715 473.0V502.6M701.7 472.6V502.6M681.3 472.7H714.5" />
<ellipse cx="691.55" cy="491.7" rx="7.6" ry="3.9" fill="#111"/>
<ellipse cx="691.55" cy="491.7" rx="5" ry="2" stroke="#666" stroke-width="0.7"/>
<path d="M701.7 482L704.2 487.5C707.7 487 712.2 489 711.2 492.5C710.7 497 705.7 497.5 704.2 495.5M702.7 489.5C706.7 488.5 710.2 490.5 709.7 493.5" stroke-width="1.3"/>
<ellipse cx="706.0" cy="491.6" rx="3.6" ry="2.6" fill="#111"/>
<path d="M704.7 495.3H709.2" />
<path d="M716.7 502.6V473.0Q716.7 471.8 717.9000000000001 471.8H750.5Q751.7 471.8 751.7 473.0V502.6M737.6 472.6V502.6M717.2 472.7H751.2" />
<ellipse cx="727.45" cy="491.7" rx="7.6" ry="3.9" fill="#111"/>
<ellipse cx="727.45" cy="491.7" rx="5" ry="2" stroke="#666" stroke-width="0.7"/>
<path d="M737.6 482L740.1 487.5C743.6 487 748.1 489 747.1 492.5C746.6 497 741.6 497.5 740.1 495.5M738.6 489.5C742.6 488.5 746.1 490.5 745.6 493.5" stroke-width="1.3"/>
<ellipse cx="741.9" cy="491.6" rx="3.6" ry="2.6" fill="#111"/>
<path d="M740.6 495.3H745.1" />
<path d="M751.7 483.5C756 487 761 494 759.3 499C757.8 502 754.5 501.5 753 499M751.7 486.5C755 490 758.6 495 757.5 498.2" />
<path d="M479.6 513.2H760.8M479.6 519.2H760.8" />
<rect x="476.3" y="510.8" width="3.3" height="10.9" rx="1.2"/>
<rect x="760.8" y="510.8" width="3.3" height="10.9" rx="1.2"/>
<path d="M487.6 558.3V512Q487.6 511 489.4 511Q491.2 511 491.2 512V558.3" fill="#fff"/>
<path d="M586.4 558.3V512Q586.4 511 588.3499999999999 511Q590.3 511 590.3 512V558.3" fill="#fff"/>
<path d="M612.1 512Q612.1 511 613.45 511Q614.8 511 614.8 512V534.2Q614.8 535.6 613.45 535.6Q612.1 535.6 612.1 534.2Z" fill="#fff"/>
<path d="M664.2 512Q664.2 511 665.5 511Q666.8 511 666.8 512V534.2Q666.8 535.6 665.5 535.6Q664.2 535.6 664.2 534.2Z" fill="#fff"/>
<path d="M620.3 512Q620.3 511 621.45 511Q622.6 511 622.6 512V520.8Q622.6 522.1999999999999 621.45 522.1999999999999Q620.3 522.1999999999999 620.3 520.8Z" fill="#fff"/>
<path d="M641.2 512Q641.2 511 642.5 511Q643.8 511 643.8 512V529Q643.8 530.4 642.5 530.4Q641.2 530.4 641.2 529Z" fill="#fff"/>
<path d="M688.8 512Q688.8 511 690.15 511Q691.5 511 691.5 512V529Q691.5 530.4 690.15 530.4Q688.8 530.4 688.8 529Z" fill="#fff"/>
<path d="M733.4 512Q733.4 511 734.8499999999999 511Q736.3 511 736.3 512V529Q736.3 530.4 734.8499999999999 530.4Q733.4 530.4 733.4 529Z" fill="#fff"/>
<path d="M615 542.5L638 530L649.7 553L629.7 565.4Z" fill="#fff"/>
<path d="M639.2 530.6C646.2 527.6 654.4 536.5 653.4 543.5C653.4 547.5 652 550.5 649 550.5"  stroke-width="1.1"/>
<path d="M640.7 532.8000000000001C645.7 531.1 651.6 538.5 651.1999999999999 543.5C651.0 546.5 650 548.7 648 548.1" />
<path d="M663 543L685.8 530L697.5 553.3L677.5 565.4Z" fill="#fff"/>
<path d="M686.8 530.6C693.8 527.6 701.9 535 700.9 542C700.9 546 699.6 550.5 696.6 550.5"  stroke-width="1.1"/>
<path d="M688.3 532.8000000000001C693.3 531.1 699.1 537 698.6999999999999 542C698.5 545 697.6 548.7 695.6 548.1" />
<path d="M707.5 543.7L730.8 530.3L742.2 552L721.7 565Z" fill="#fff"/>
<path d="M731.8 530.6C738.8 527.6 746.9 535 745.9 542C745.9 546 744.6 549.8 741.6 549.8"  stroke-width="1.1"/>
<path d="M733.3 532.8000000000001C738.3 531.1 744.1 537 743.6999999999999 542C743.5 545 742.6 548.0 740.6 547.4" />
<path d="M501.75 525.9H518.95L517.95 530.4H502.75Z" />
<path d="M500.35 530.4H520.35L519.15 532.2H501.55Z"  stroke-width="0.9"/>
<path d="M502.95000000000005 532.2C502.95000000000005 534 503.95000000000005 534.6 503.95000000000005 536V538.4C499.85 539 497 540 497 544V558.3M517.75 532.2C517.75 534 516.75 534.6 516.75 536V538.4C520.85 539 523.7 540 523.7 544V558.3M500.35 539.2H520.35" />
<path d="M531.9 525.9H549.1L548.1 530.4H532.9Z" />
<path d="M530.5 530.4H550.5L549.3 532.2H531.7Z"  stroke-width="0.9"/>
<path d="M533.1 532.2C533.1 534 534.1 534.6 534.1 536V538.4C530.0 539 527.2 540 527.2 544V558.3M547.9 532.2C547.9 534 546.9 534.6 546.9 536V538.4C551.0 539 553.8 540 553.8 544V558.3M530.5 539.2H550.5" />
<path d="M562.25 525.9H579.45L578.45 530.4H563.25Z" />
<path d="M560.85 530.4H580.85L579.65 532.2H562.0500000000001Z"  stroke-width="0.9"/>
<path d="M563.45 532.2C563.45 534 564.45 534.6 564.45 536V538.4C560.35 539 557.5 540 557.5 544V558.3M578.25 532.2C578.25 534 577.25 534.6 577.25 536V538.4C581.35 539 584.2 540 584.2 544V558.3M560.85 539.2H580.85" />
<path d="M505 552.5c1-1.5 2.5-1.5 3 0c2 1 5 .5 9 1M508 556l4 .3" stroke-width="1.6"/>
<path d="M536.5 553.5h3v2.5h-3zM541.5 553l3 .5v2.5h-3z" stroke-width="1.4" fill="#111"/>
<path d="M566 552.5c1-1.5 2.5-1.5 3 0c2 1 4 .5 7 1M570 556l4-1M571 551.5v4" stroke-width="1.6"/>
<rect x="480.4" y="558.4" width="124.3" height="4.9" fill="#fff"/>
<path d="M482.6 572.6H602.4Q603.6 573.6 602.4 574.7H482.6Q481.4 573.6 482.6 572.6Z" />
<path d="M486.7 563.3V577.2"  stroke-width="1.5"/>
<path d="M495.8 563.3V577.2"  stroke-width="1.5"/>
<path d="M505 563.3V577.2"  stroke-width="1.5"/>
<path d="M523.3 563.3V577.2"  stroke-width="1.5"/>
<path d="M533.3 563.3V577.2"  stroke-width="1.5"/>
<path d="M542.5 563.3V577.2"  stroke-width="1.5"/>
<path d="M551.7 563.3V577.2"  stroke-width="1.5"/>
<path d="M560.8 563.3V577.2"  stroke-width="1.5"/>
<path d="M570 563.3V577.2"  stroke-width="1.5"/>
<path d="M589 563.3V577.2"  stroke-width="1.5"/>
<path d="M598.3 563.3V577.2"  stroke-width="1.5"/>
<path d="M500.5 563.3V572.6"  stroke-width="0.8"/>
<path d="M528 563.3V572.6"  stroke-width="0.8"/>
<path d="M547 563.3V572.6"  stroke-width="0.8"/>
<path d="M556.5 563.3V572.6"  stroke-width="0.8"/>
<path d="M575.5 563.3V572.6"  stroke-width="0.8"/>
<path d="M584.2 563.3V572.6"  stroke-width="0.8"/>
<path d="M488.4 649.2V602C488.4 566 541.7 566 541.7 602V649.2" fill="#fff"/>
<path d="M510.2 574.5V566.5Q510 561 514.7 561Q519.4 561 519.3 566.5V574.5" fill="#fff"/>
<path d="M510.2 566.5H519.3" />
<path d="M487.6 649.3H542.4V658.4H487.6ZM487.6 650.6H542.4M487.6 657.2H542.4M488.5 658.4L485.2 661.2V668.4H544.6V661.2L541.5 658.4M485.2 661.2H544.6M486.6 660H543.2" />
<path d="M474 669.2H765.5M474 674.4H765.5M474 669.2V674.4M765.5 669.2V674.4" />
<path d="M556.3 652.5Q556.3 651 557.8 651H578.0999999999999Q579.5999999999999 651 579.5999999999999 652.5C579.5999999999999 658 577.8 662 574.8 664.3M556.3 652.5C556.3 658 558.0999999999999 662 561.8 664.3"  stroke-width="1.15"/>
<path d="M576.3 653.4H578.9C583.5 654 583.9 659.6 580.8 661.6C579.8 662.4 578.3 662.7 577.0999999999999 662.4"  stroke-width="1.4"/>
<path d="M562.0999999999999 664.3L563.3 660.3Q563.5999999999999 659.5 564.5999999999999 659.5H570.5Q571.4 659.5 571.6999999999999 660.3L572.8 664.3M571.9 661H577.3"  stroke-width="1.15"/>
<path d="M549.3 663.9L551.6999999999999 665.3H559.6999999999999L560.5 664.4H586.6999999999999C584.3 666.6 580.3 668.5 575.3 668.5H561.3C557.3 668.5 552.3 667 549.3 663.9Z" />
<path d="M549.3 663.7L551.6999999999999 665.5H559.9V664.1Z" fill="#111" stroke-width="0.8"/>
<path d="M595.7 652.5Q595.7 651 597.2 651H617.5Q619.0 651 619.0 652.5C619.0 658 617.2 662 614.2 664.3M595.7 652.5C595.7 658 597.5 662 601.2 664.3"  stroke-width="1.15"/>
<path d="M615.7 653.4H618.3000000000001C622.9000000000001 654 623.3000000000001 659.6 620.2 661.6C619.2 662.4 617.7 662.7 616.5 662.4"  stroke-width="1.4"/>
<path d="M601.5 664.3L602.7 660.3Q603.0 659.5 604.0 659.5H609.9000000000001Q610.8000000000001 659.5 611.1 660.3L612.2 664.3M611.3000000000001 661H616.7"  stroke-width="1.15"/>
<path d="M588.7 663.9L591.1 665.3H599.1L599.9000000000001 664.4H626.1C623.7 666.6 619.7 668.5 614.7 668.5H600.7C596.7 668.5 591.7 667 588.7 663.9Z" />
<path d="M588.7 663.7L591.1 665.5H599.3000000000001V664.1Z" fill="#111" stroke-width="0.8"/>
<path d="M633 636.8V627C633 625 634 624.3 636 624.3H666.5C668.5 624.3 669.5 625 669.5 627V636.8M632.6 628.4H669.9M632.6 632.4H669.9M632.6 635H669.9M633 636.8H669.5" />
<path d="M633 636.8C632.2 638 632.6 639.5 632.6 641V665.8Q632.6 668.4 635.2 668.4H667.4Q670 668.4 670 665.8V641C670 639.5 670.3 638 669.5 636.8" />
<path d="M646.4 641.5V629.5Q646.4 626 651.4 626Q656.4 626 656.4 629.5V641.5" fill="#fff" stroke-width="1.3"/>
<path d="M649 645.5V636.5Q649 634.5 651.4 634.5Q653.8 634.5 653.8 636.5V645.5" fill="#fff"/>
<path d="M647.8 629.6Q647.8 627.6 651.4 627.6Q655 627.6 655 629.6V640" />
<circle cx="651.4" cy="649.2" r="3.9" fill="#fff"/>
<path d="M685.2 566.8H748.2L744 574.3M685.2 566.8L689.4 574.3M686 568H747.4M708 567V571.5M716.5 567V571.5M724 567V571.5M712 568.5H720"  stroke-width="1.1"/>
<path d="M677 591C677 581 684 574.8 694 573.6C708 572.3 724 572.3 738 573.6C748 574.8 755 581 755 591C755 598 748 604 738 607C724 611 708 611 694 607C684 604 677 598 677 591Z" fill="#fff"/>
<rect x="755.4" y="578.4" width="2.2" height="20.0" rx="0.8"/>
<ellipse cx="715.8" cy="590.8" rx="8.4" ry="9.8" stroke-width="1.2"/>
<ellipse cx="715.8" cy="590.8" rx="6.9" ry="8.3" />
<path d="M710.3 590.8H721" stroke-width="1.3"/>
<circle cx="682.9" cy="591.3" r="1.5" />
<circle cx="690.8" cy="591.7" r="2.7" />
<ellipse cx="700" cy="585.8" rx="1.8" ry="2.3" />
<rect x="698.2" y="594.4" width="3.6" height="3.8" rx="0.8"/>
<rect x="732.6" y="589.4" width="4.0" height="4.6" rx="0.8"/>
<circle cx="742.5" cy="591.7" r="2.7" />
<circle cx="750" cy="591.3" r="1.5" />
<path d="M691.8 607.8L697.6 658.3M739.6 607.8L734.2 658.3" />
<path d="M704.8 610.2V622.6H728V610.2M708 622.6V625H724.5V622.6" />
<path d="M713 625C713 631 710 634 709 638M711 638C712.5 633 714 630.5 716.5 630.5C719 630.5 720.5 633 722 638M724 638C723 634 720 631 720.5 625M712.5 627.5L716.5 630.5L721 627.5"  stroke-width="1.2"/>
<circle cx="716.5" cy="624.6" r="2.6" fill="#fff" stroke-width="1.2"/>
<path d="M736.2 609.4L737 613L754.8 634.2L756.4 632.8L739 611.5L738.4 608.8" />
<rect x="678.4" y="658.4" width="75" height="10.2" rx="5.1" fill="#fff"/>
<ellipse cx="716.2" cy="663.4" rx="2.7" ry="3.1" />
<path d="M475.6 674.4V901.7M764.6 674.4V901.7M477.4 676.6V901.7M762.8 676.6V901.7M477.4 676.6H762.8" />
<path d="M575.1 676.6V901.7M576.9 676.6V901.7M662.8 676.6V901.7M664.6 676.6V901.7" />
<rect x="581.6" y="679.8" width="75.9" height="216.8"/>
<rect x="490.8" y="690.6" width="70.4" height="196.6"/>
<rect x="493.7" y="693.5" width="64.6" height="190.8" stroke-width="2.1"/>
<rect x="504.4" y="705.4" width="42.9" height="168.6"/>
<rect x="507.0" y="708" width="37.7" height="163.4" stroke-width="1.2"/>
<rect x="678.2" y="690.6" width="70.4" height="196.6"/>
<rect x="681.1" y="693.5" width="64.6" height="190.8" stroke-width="2.1"/>
<rect x="692.4" y="705.4" width="42.3" height="168.6"/>
<rect x="695.0" y="708" width="37.1" height="163.4" stroke-width="1.2"/>
<circle cx="568.1" cy="697.4" r="3.7" stroke-width="2.3"/>
<circle cx="568.1" cy="697.4" r="1.2" stroke-width="0.9"/>
<circle cx="671.1" cy="697.4" r="3.7" stroke-width="2.3"/>
<circle cx="671.1" cy="697.4" r="1.2" stroke-width="0.9"/>
<path d="M581.6 748.6H657.6M581.6 754.3H657.6M581.6 822.6H657.6M581.6 828.2H657.6" />
<path d="M591.5 713.2C594.5 718 593.5 722 592.6 727C591.8 732 591.4 737 591.8 740H637.4C637.6 732 636.4 722 632.5 715.5L629.5 713.5" />
<path d="M590.2 712L596.5 713.6L601 713.8M590.2 712L591.5 713.2M601 713.8C603 709.5 609 707 614.5 707C620 707 627 709.8 629.5 713.5M601.8 713.9H629" />
<circle cx="614.4" cy="704.6" r="3.3" />
<circle cx="614.4" cy="704.6" r="2" />
<path d="M632.4 720.6C637 716.5 645 716.5 649 721.5C653.5 728 649.5 737.5 638.5 740M634.6 722.6C638.5 720 643.5 720.5 646 724.3C649 729.5 645.5 735.5 637.5 737.6" />
<path d="M591.5 738.6L586.3 745.4Q590 746.6 596 747H637M597.5 741.8C600 745 606 745.8 612 745.8H634L636 741.8M632 741.2H650L653 746.6L634 745.8M632.5 742.6H649.5"  stroke-width="1.1"/>
<path d="M596 772H636.2L634.9000000000001 780.2M596 772L597.3 780.2" />
<path d="M596 780.2H636.2L634.9000000000001 788.6M596 780.2L597.3 788.6" />
<path d="M596 788.6H636.2L634.9000000000001 797M596 788.6L597.3 797" />
<path d="M596 797H636.2L632.8 814.5M596 797L599.3 814.5" />
<path d="M585.6 814.6H646.4V817.2H585.6ZM584.4 817.2H647.8V822.4H584.4ZM584.4 819.8H647.8"  stroke-width="1.1"/>
<path d="M473.8 901.7H762.6M473.8 901.7V931.3H755.8L754.8 908.6L754.2 901.7M473.8 908.7H754.8M473.8 923.7H755.5M703.4 901.7V931.3" />
</g>
<g id="side">
<path d="M1061.4 931V232.2H1064.8V931" />
<path d="M1061.4 416.2H988.4V421.6H1061.4M1061.4 503.2H988.4V508.8H1061.4" />
<path d="M1011.2 360.2H1059.4L1058.6 368.8M1011.2 360.2L1012.5 369.0" />
<path d="M1010.8 369H1059.4L1058.6 377.6M1010.8 369L1012.0999999999999 377.8" />
<path d="M1010.5 377.8H1059.4L1058.6 386.40000000000003M1010.5 377.8L1011.8 386.6" />
<path d="M1010.3 386.7H1059.4L1058.6 395.3M1010.3 386.7L1011.5999999999999 395.5" />
<path d="M1010.8 395.6H1059.4L1058.6 404.20000000000005M1010.8 395.6L1012.0999999999999 404.40000000000003" />
<path d="M1011.5 397L1015 416.2" />
<path d="M1022.7 371.2V377C1018 378 1016.2 380 1016.2 383.5V413.5Q1016.2 416.2 1019 416.2H1039.4Q1042.2 416.2 1042.2 413.5V383.5C1042.2 380 1040.4 378 1035.6 377V371.2Z" fill="#fff"/>
<path d="M1021.2 366.8H1037.2V371.2H1021.2Z" fill="#fff"/>
<path d="M1017.4 384V414" />
<path d="M1042.2 381.2H1059.6V416.2H1042.2Z" fill="#fff"/>
<path d="M1034.5 378.6H1059.6M1034.5 376.6H1059.6V378.8M1037 376.6L1041 369.5L1059 376M1034.5 364.4H1042.5V369.5H1034.5Z"  stroke-width="1.1"/>
<path d="M1001.8 477L1000.2 502.9" />
<path d="M1001.8 502.9V473.5Q1001.8 471.2 1004.0999999999999 471.2H1022.1000000000001Q1024.4 471.2 1024.4 473.5V502.9" fill="#fff" stroke-width="1.2"/>
<path d="M1002.3 472.4H1023.9000000000001" />
<path d="M1009.0 481V500H1016.5999999999999V481M1003.0 473V502" />
<path d="M1002.4 488.5L1004.8 491L1002.4 493.5Z" fill="#111"/>
<path d="M1031.2 502.9V473.5Q1031.2 471.2 1033.5 471.2H1050.6000000000001Q1052.9 471.2 1052.9 473.5V502.9" fill="#fff" stroke-width="1.2"/>
<path d="M1031.7 472.4H1052.4" />
<path d="M1038.4 481V500H1046.0V481M1032.4 473V502" />
<path d="M1031.8 488.5L1034.2 491L1031.8 493.5Z" fill="#111"/>
<path d="M1052.9 477.8H1058Q1060 477.8 1060 480V499Q1060 501.2 1058 501.2H1052.9M1052.9 480.4H1056.6Q1057.6 480.4 1057.6 481.6V497.6Q1057.6 498.6 1056.6 498.6H1052.9" />
<path d="M1028.5 527H1044.5V531H1028.5Z" fill="#fff"/>
<path d="M1030.3 531V536C1025 537.5 1022.8 539.5 1022.8 543V574Q1022.8 576.8 1025.6 576.8H1050.4Q1053.2 576.8 1053.2 574V543C1053.2 539.5 1051 537.5 1044 536V531" fill="#fff"/>
<path d="M1022.8 557.8H1053.2M1022.8 574.4H1053.2M1024 575.6H1052"  stroke-width="1.1"/>
<path d="M1036.2 530.5C1036 540 1035.6 552 1037.5 558.5C1039.5 565.5 1056 566 1059 558.5C1060.6 552 1060.4 540 1060.4 530.5Z" fill="#fff" stroke-width="1.1"/>
<ellipse cx="1047.8" cy="558.8" rx="10.6" ry="5.5" fill="#fff" stroke-width="1.1"/>
<path d="M1046.5 534V549L1045.2 551M1048.3 534V548" />
<path d="M1045.8 514.4C1043.5 516 1044 519.5 1046.5 521.5C1049.5 524 1052 527 1052.6 530.5C1053 533 1050.6 534.6 1048.6 533.4M1048.4 513.6C1046.5 516 1047 518.5 1049.4 520.4C1052.4 523 1054.8 526.5 1054.8 530.5C1054.8 534.5 1051 536.8 1047.6 535" stroke-width="1.1"/>
<path d="M1045.6 512.8H1059.5V518.6H1053.5V516.6H1050V518.6H1047" stroke-width="1.1" fill="#fff"/>
<path d="M939.2 566.8H991.8" stroke-width="1.8"/>
<path d="M991.8 566.8L990 571.5M939.2 566.8L938.2 570" />
<path d="M938.9 567.5L937.6 610.3H963.5M990 610.3H993.6V572" />
<path d="M936.9 582.4C933.5 586.5 932.4 590.5 932.4 595.4V649.8M937.4 580C936 584 935.6 590 936.4 594" />
<path d="M954.5 572V566.5C954.5 558.5 963.8 558.5 964.3 566.5V572.6M966 566.8V574" stroke-width="1.1"/>
<ellipse cx="949.9" cy="588.5" rx="7.5" ry="10.1" stroke-width="1.1"/>
<path d="M938.9 610.3V621.9H957V610.3M946.6 607V625" />
<path d="M938.9 620.6H911.5Q909.8 620.6 909.8 622.3V626.1Q909.8 627.8 911.5 627.8H938.9Z" fill="#fff"/>
<path d="M938.9 622.4C945 624.5 953 624.5 963.4 621M940 626.5H957.5M944.7 627.8H955.1L950.3 653.5ZM947.6 628V641M950.3 628V645M952.8 628V641"  stroke-width="1.1"/>
<path d="M955.2 631H963.4M955.2 634.2H963.4M955.2 637.6H963.4" />
<path d="M963.5 610.3V658.2M968 606.4V658.2H982.9M990.1 606.4L986.2 658.2M940.2 658.2H959.6" />
<path d="M931.8 649.6H954.4" stroke-width="1.6"/>
<path d="M931.8 649.8V661M935.4 668.6V661M989.6 658.2V668.6" />
<rect x="929.6" y="658.9" width="5.7" height="9.7"/>
<path d="M989.4 625.4C993 626 994.2 629 994.4 631.5H996.4Q997.3 631.5 997.3 632.5V638.6Q997.3 639.4 996.4 639.4H991.5V631.5M989.6 639.4V631.5"  stroke-width="1.1"/>
<path d="M941 668.2h1M956 668.2h3M961 668.2h2M974 668.2h4M983 668.2h1"  stroke-width="1.4"/>
<path d="M1064.8 668.7H918.8V674.4H1064.8Z" />
<path d="M923.3 674.4V902.5H1064.8M918.8 675.6V902.5H923.3M1063.9 674.4V931" />
<path d="M917.6 690.6H913V886.9H917.6M915.2 690.6V886.9M917.6 690.6V886.9" />
<path d="M912.4 741.5V744" />
<path d="M938.9 902.5L935.8 931H1064.8M938.4 908.4H1064.8M936.6 924H1064.8M936.2 927.2H1064.8" />
</g>
<g id="top">
<path d="M1192.9 785.4H1484.7V931.3H1192.9ZM1192.9 788.4H1484.7M1192.9 861.1H1484.7" />
<circle cx="1219.4" cy="814.4" r="22.9" stroke-width="0.9"/>
<circle cx="1264.5" cy="814.4" r="17.2" stroke-width="0.9"/>
<circle cx="1323" cy="812" r="21.1" stroke-width="2"/>
<circle cx="1323" cy="812" r="16" stroke-width="0.8"/>
<circle cx="1323" cy="812" r="6.4" stroke-width="0.8"/>
<circle cx="1323" cy="812" r="4.5" stroke-width="1.5"/>
<circle cx="1323" cy="812" r="2.2" stroke-width="0.8"/>
<circle cx="1373.2" cy="812" r="21.1" stroke-width="2"/>
<circle cx="1373.2" cy="812" r="16" stroke-width="0.8"/>
<circle cx="1373.2" cy="812" r="6.4" stroke-width="0.8"/>
<circle cx="1373.2" cy="812" r="4.5" stroke-width="1.5"/>
<circle cx="1373.2" cy="812" r="2.2" stroke-width="0.8"/>
<rect x="1400.4" y="807.5" width="23.0" height="25.7" rx="3"/>
<ellipse cx="1411.9" cy="820.2" rx="7.6" ry="9.2" stroke-width="1.6"/>
<rect x="1429" y="807.5" width="23" height="25.7" rx="3"/>
<ellipse cx="1440.5" cy="820.2" rx="7.6" ry="9.2" stroke-width="1.6"/>
<rect x="1457.3" y="807.5" width="23.0" height="25.7" rx="3"/>
<ellipse cx="1468.8" cy="820.2" rx="7.6" ry="9.2" stroke-width="1.6"/>
<circle cx="1233.9" cy="890.3" r="29.3" stroke-width="0.9"/>
<circle cx="1233.9" cy="890.3" r="26.8" stroke-width="2"/>
<circle cx="1233.9" cy="890.3" r="9.5" stroke-width="0.9"/>
<circle cx="1233.9" cy="890.3" r="4.9" stroke-width="0.9"/>
<circle cx="1287.1" cy="880.1" r="18" stroke-width="0.9"/>
<circle cx="1287.1" cy="880.1" r="11.5" />
<circle cx="1287.1" cy="880.1" r="9.9" stroke-width="0.9"/>
<path d="M1281.1 869.1Q1281.6 865.6 1284.5 865.6Q1287.3999999999999 865.6 1287.8999999999999 868.7" />
<path d="M1276.6999999999998 885.4L1269.1 898.5"  stroke-width="1.6"/>
<path d="M1281.6 893.1Q1285.6 890.1 1289.6 893.1L1291.1 899.1Q1285.6 904.1 1280.1 899.1Z" fill="#fff" stroke-width="1.2"/>
<path d="M1295.6 887.1L1301.6 891.1L1299.1 894.6L1293.1 890.6M1291.6 894.1L1295.1 895.1L1294.1 898.6" />
<circle cx="1327.1" cy="880.1" r="18" stroke-width="0.9"/>
<circle cx="1327.1" cy="880.1" r="11.5" />
<circle cx="1327.1" cy="880.1" r="9.9" stroke-width="0.9"/>
<path d="M1321.1 869.1Q1321.6 865.6 1324.5 865.6Q1327.3999999999999 865.6 1327.8999999999999 868.7" />
<path d="M1316.6999999999998 885.4L1309.1 898.5"  stroke-width="1.6"/>
<path d="M1321.6 893.1Q1325.6 890.1 1329.6 893.1L1331.1 899.1Q1325.6 904.1 1320.1 899.1Z" fill="#fff" stroke-width="1.2"/>
<path d="M1335.6 887.1L1341.6 891.1L1339.1 894.6L1333.1 890.6M1331.6 894.1L1335.1 895.1L1334.1 898.6" />
<clipPath id="cl1"><rect x="1190" y="861.1" width="300" height="90"/></clipPath>
<g clip-path="url(#cl1)">
<circle cx="1370.1" cy="877" r="18.8" stroke-width="1.1"/>
<ellipse cx="1435.9" cy="884" rx="31.2" ry="27.5" stroke-width="1.7"/>
</g>
<path d="M1366 897.6H1374.4L1372.6 900.6V903.6H1368V900.6Z" fill="#333" stroke-width="1"/>
<path d="M1396.9 861.1V914.5H1474.1V861.1M1396.9 911.4H1474.1" />
<path d="M1398 913H1473"  stroke="#777" stroke-width="1.6" stroke-dasharray="4 2"/>
<path d="M1405 883.9H1410.5M1460.5 883.9H1467"  stroke-width="1.4"/>
<path d="M1427 908L1430 911.4H1442.5L1445.5 908" stroke-width="1.6"/>
<path d="M1432.9 913V939.6H1439.7V913" fill="#fff"/>
<rect x="1474.1" y="892.4" width="3.1" height="15.2"/>
<path d="M1210.2 931.3L1211.4 936.6H1278.5L1279.7 931.3M1210.8 934H1279" />
<path d="M1397.7 931.3L1398.5 936.6H1466.2L1467.2 931.3M1398 934H1467" />
<path d="M1283 935.2H1291.2M1284.4 935.2L1285 931.3M1289.8 935.2L1289.2 931.3M1386.2 935.2H1394.6M1387.6 935.2L1388.2 931.3M1393 935.2L1392.4 931.3" />
<path d="M1315.7 931.3L1317.5 933.2L1351 937.6L1355.8 931.3" />
<path d="M1192.9 903V908" stroke-width="1.6"/>
</g>
</g>
<g font-family="DejaVu Sans, Liberation Sans, sans-serif" font-size="16" fill="#111" letter-spacing="0.25">
<text x="480.6" y="978.7">Front view</text><text x="911.4" y="978.7" letter-spacing="0.05">Side view</text><text x="1199.5" y="978.7">Top view</text>
</g>
</svg>
<svg width="1920" height="1080" viewBox="0 0 1920 1080">
<defs>
<linearGradient id="hairg" x1="0" y1="0" x2="0" y2="1"><stop offset="0" stop-color="#ffe033"/><stop offset="0.55" stop-color="#ffb915"/><stop offset="1" stop-color="#ee7d00"/></linearGradient>
<linearGradient id="blobg" x1="0" y1="0" x2="1" y2="1"><stop offset="0" stop-color="#ffd52e"/><stop offset="1" stop-color="#f7a800"/></linearGradient>
<linearGradient id="txtg" x1="0" y1="0" x2="0" y2="1"><stop offset="0" stop-color="#2aa0e8"/><stop offset="1" stop-color="#1559a8"/></linearGradient>
<linearGradient id="dwgb" x1="0" y1="0" x2="1" y2="1"><stop offset="0" stop-color="#173f7a"/><stop offset="0.6" stop-color="#245a93"/><stop offset="1" stop-color="#1d4c86"/></linearGradient>
<linearGradient id="dwgy" x1="0" y1="0" x2="1" y2="0"><stop offset="0" stop-color="#f1cf2a"/><stop offset="0.35" stop-color="#fdf08c"/><stop offset="0.7" stop-color="#f6d730"/><stop offset="1" stop-color="#eec81c"/></linearGradient>
<linearGradient id="btng" x1="0" y1="0" x2="0" y2="1"><stop offset="0" stop-color="#f0262f"/><stop offset="0.5" stop-color="#e01f28"/><stop offset="1" stop-color="#bf1a22"/></linearGradient>
<radialGradient id="btnc" cx="0.45" cy="0.4" r="0.6"><stop offset="0" stop-color="#c4141b"/><stop offset="1" stop-color="#8e0a10"/></radialGradient>
</defs>
<!-- mascot: coordinates traced at 5.4x -->
<g transform="translate(1690,175) scale(0.185185)" stroke-linejoin="round" stroke-linecap="round">
 <!-- headband tails -->
 <path d="M710 240C760 200 815 210 855 262L805 250C835 290 818 340 800 368C792 322 770 292 728 282Z" fill="#3e3e41"/>
 <!-- back arm (raised) -->
 <path d="M610 560L690 590L745 535L770 545L752 640L650 668L596 610Z" fill="#2b7dd6" stroke="#1b4f94" stroke-width="7"/>
 <path d="M640 565L690 590L730 552L720 540Z" fill="#fff"/>
 <!-- legs -->
 <path d="M405 790L318 828L288 902L352 934L402 862L505 842Z" fill="#2b7dd6" stroke="#1b4f94" stroke-width="7"/>
 <path d="M500 832L604 818L655 922L602 952L540 872Z" fill="#2b7dd6" stroke="#1b4f94" stroke-width="7"/>
 <path d="M292 905L352 936L342 962L284 930Z" fill="#4a4a4c"/>
 <path d="M600 950L655 920L668 946L612 976Z" fill="#4a4a4c"/>
 <path d="M238 992C250 960 280 940 300 940L345 962C335 990 300 1012 262 1012Z" fill="#2b7dd6" stroke="#1b4f94" stroke-width="7"/>
 <path d="M622 972L676 948C700 975 712 1010 706 1040C680 1040 640 1010 622 972Z" fill="#2b7dd6" stroke="#1b4f94" stroke-width="7"/>
 <path d="M400 780L604 800L600 850L410 840Z" fill="#2b7dd6"/>
 <!-- torso -->
 <path d="M432 538L520 592L602 560L642 640L602 822L398 800L410 650L300 700L268 652Z" fill="#2b7dd6" stroke="#1b4f94" stroke-width="7"/>
 <path d="M520 600C505 660 500 730 505 806" fill="none" stroke="#7b7c82" stroke-width="16"/>
 <path d="M395 792L604 822" fill="none" stroke="#7b7c82" stroke-width="14"/>
 <!-- face -->
 <ellipse cx="722" cy="372" rx="26" ry="38" fill="#f1b884" stroke="#8a4b1f" stroke-width="6"/>
 <path d="M688 300L716 300L714 390Z" fill="#ee8a10"/>
 <path d="M312 285C288 380 350 505 490 532C600 548 692 470 716 380L720 295Z" fill="#f6c594" stroke="#8a4b1f" stroke-width="6"/>
 <ellipse cx="410" cy="340" rx="50" ry="33" fill="#fff" stroke="#5a3216" stroke-width="5"/>
 <ellipse cx="580" cy="342" rx="50" ry="33" fill="#fff" stroke="#5a3216" stroke-width="5"/>
 <circle cx="420" cy="342" r="23" fill="#4b9bde"/><circle cx="420" cy="342" r="10" fill="#1d2a44"/>
 <circle cx="570" cy="344" r="23" fill="#4b9bde"/><circle cx="570" cy="344" r="10" fill="#1d2a44"/>
 <path d="M350 305L470 345M640 308L520 348" stroke="#3a2412" stroke-width="9" fill="none"/>
 <path d="M458 392C450 410 462 420 480 414" fill="none" stroke="#8a4b1f" stroke-width="6"/>
 <path d="M418 440Q500 485 578 424" fill="none" stroke="#7a3c14" stroke-width="7"/>
 <circle cx="488" cy="496" r="5" fill="#8a4b1f"/>
 <!-- hair -->
 <path d="M332 225L345 118L372 152L400 84L432 112L470 48L506 86L560 24L592 72L640 58L660 112L702 140L690 176L716 190L706 246Z" fill="url(#hairg)" stroke="#c9720a" stroke-width="5"/>
 <path d="M440 210C430 160 450 120 480 100C470 150 480 190 500 215ZM560 215C550 160 570 110 610 90C590 140 600 190 620 220Z" fill="#f39a0c" opacity="0.8"/>
 <!-- headband -->
 <path d="M305 235C440 205 600 210 716 236L722 306C600 345 430 335 310 298Z" fill="#4a4a4d" stroke="#2c2c2e" stroke-width="5"/>
 <!-- stick -->
 <path d="M68 746L918 422" stroke="#7a3f17" stroke-width="36" fill="none"/>
 <path d="M70 744L916 421" stroke="#b5692e" stroke-width="22" fill="none"/>
 <path d="M72 738L914 416" stroke="#cf8a4a" stroke-width="6" fill="none"/>
 <!-- hands -->
 <path d="M215 690C215 655 250 640 285 650C310 660 312 700 290 715C260 730 220 722 215 690Z" fill="#f6c594" stroke="#8a4b1f" stroke-width="6"/>
 <path d="M698 505C698 470 735 458 762 472C782 486 776 520 756 532C730 542 700 535 698 505Z" fill="#f6c594" stroke="#8a4b1f" stroke-width="6"/>
 <!-- blob -->
 <path d="M868 268C900 250 912 300 932 320C972 310 1032 320 1040 372C1046 420 1010 442 1016 482C1022 522 1010 560 990 556C968 550 982 500 960 490C930 470 930 440 906 400C890 350 880 310 868 268Z" fill="url(#blobg)" stroke="#e39b00" stroke-width="6"/>
 <path d="M945 345C975 335 1010 345 1018 375" fill="none" stroke="#ffe98a" stroke-width="10"/>
</g>
<!-- brand text -->
<g font-family="'DejaVu Sans','Liberation Sans',sans-serif" fill="url(#txtg)" stroke="#1c7fd0" stroke-width="1.6" stroke-linejoin="round">
 <text font-size="45" x="1655 1684 1694 1717 1729 1741" y="395 406 411 413 414 416" rotate="3 8 10 6 8 10">Pislik</text>
 <text font-size="41" x="1775 1814 1824 1862 1890" y="414 413 410 405 396" rotate="-6 -8 -10 -12 -18">Mimar</text>
</g>
<!-- DWG icon -->
<g>
 <path d="M96.7 763H150L186.2 799V880H96.7Z" fill="url(#dwgb)"/>
 <path d="M96.7 825H125L186.2 843.8V880H96.7Z" fill="url(#dwgy)"/>
 <path d="M150 763C158 770 160 790 158 800C170 796 180 797 186.2 799C180 788 162 768 150 763Z" fill="#4f7fb5"/>
 <path d="M150 763C160 772 162 790 158 800L186.2 799Z" fill="#3f6ea8" opacity="0.7"/>
 <path d="M122.5 763V825M96.7 800.8H186.2" stroke="#fff" stroke-width="2" fill="none"/>
 <rect x="112.2" y="790.8" width="20.4" height="20.4" fill="#24558f" stroke="#fff" stroke-width="2.2"/>
 <rect x="121.2" y="799.6" width="2.6" height="2.6" fill="#fff"/>
 <text x="119.5" y="871.5" font-family="'Liberation Sans',sans-serif" font-weight="bold" font-size="27" fill="#0c0c0c" textLength="63" lengthAdjust="spacingAndGlyphs">.dwg</text>
</g>
<!-- Download button -->
<g>
 <rect x="23" y="901.5" width="232" height="83" rx="41.5" fill="#8b0d13"/>
 <rect x="21.2" y="899" width="232" height="83" rx="41.5" fill="url(#btng)"/>
 <circle cx="212" cy="941.5" r="25.5" fill="url(#btnc)"/>
 <path d="M205.5 923.5H218.5V940H226.5L212 959.5L197.5 940H205.5Z" fill="#fff"/>
 <text x="40.5" y="954.6" font-family="'Liberation Sans',sans-serif" font-weight="bold" font-size="31.5" fill="#fff" stroke="#fff" stroke-width="0.7" textLength="137.5" lengthAdjust="spacingAndGlyphs">DOWNLOAD</text>
</g>
</svg>
<div id="status"></div>
<div id="stgrad" class="abs" style="left:0;top:1035px;width:1920px;height:5px;background:linear-gradient(#212832,#1b1e23)"></div>
<svg width="1920" height="1080" viewBox="0 0 1920 1080" style="pointer-events:none">
<polygon points="100,1034.500 108.700,1011 176,1011 168.700,1034.500" fill="#303743"/>
<g stroke="#e6e9ee" stroke-width="2"><path d="M16 1018h17M16 1023h17M16 1028h17"/></g>
<g stroke="#3d444f" stroke-width="1.200" fill="none"><path d="M42 1032l8-16M210 1032l8-16"/></g>
<g stroke="#e6e9ee" stroke-width="2"><path d="M186 1023h14M193 1016v14"/></g>
<rect x="1431" y="1013" width="487" height="23" fill="#2d3541"/>
<g fill="#222933"><rect x="1472" y="1013" width="2.500" height="23"/><rect x="1577" y="1013" width="2" height="23"/><rect x="1643" y="1013" width="2.500" height="23"/><rect x="1720" y="1013" width="2.500" height="23"/><rect x="1759.500" y="1013" width="2" height="23"/><rect x="1788" y="1013" width="2.500" height="23"/><rect x="1814" y="1013" width="2.500" height="23"/><rect x="1866" y="1013" width="2.500" height="23"/><rect x="1892.500" y="1013" width="2" height="23"/></g>
<rect x="1475.200" y="1014" width="21.600" height="22" fill="#4f86c6"/>
<rect x="1604.200" y="1014" width="22" height="22" fill="#4f86c6"/>
<g fill="none" stroke="#e6e9ee" stroke-width="1.300">
 <path d="M1480.500 1017.500v14h12.500M1480.500 1026.500h5v5" />
 <circle cx="1509.500" cy="1025" r="6.600"/><path d="M1509.500 1025h8.500M1509.500 1025l6.500-6"/>
 <path d="M1584 1031.500h15M1584 1031.500l13-12M1591 1025.500a7 7 0 0 1 1.800 6" />
 <path d="M1609.500 1020.500h12.500v12.500h-12.500z"/><rect x="1607.500" y="1017.500" width="4" height="4" fill="#4f86c6"/>
 <path d="M1650.500 1021v-3.500h3.500M1661 1017.500h3.500v3.500M1664.500 1029v3.500h-3.500M1654 1032.500h-3.500v-3.500" stroke-dasharray="2.500 1.200"/><rect x="1654.500" y="1021.500" width="6" height="6"/>
 <path d="M1773.600 1015v18M1764.600 1024h18" stroke-width="1.800"/>
 <rect x="1794.500" y="1017.500" width="5" height="5"/><circle cx="1805" cy="1023" r="2.800"/><path d="M1797 1032.500l3-5 3 5z"/>
 <rect x="1871.500" y="1017.500" width="15" height="12"/><path d="M1875 1026l3.500-3.500M1875 1023.500v2.500h2.500M1883.500 1021l-3.500 3.500M1883.500 1023.500v-2.500h-2.500" stroke-width="1"/>
</g>
<path d="M1526 1023h7.500l-3.750 4.200zM1565.500 1023h7.500l-3.750 4.200zM1631 1023h7.500l-3.750 4.200zM1749 1023h7.500l-3.750 4.200z" fill="#c9cdd4"/>
<g stroke-width="1.200" fill="none"><path d="M1549.500 1016v17" stroke="#59d6c0"/><path d="M1543 1018.500l12 12.500" stroke="#e0566a"/><path d="M1556 1019l-12.500 11" stroke="#c9cdd4" stroke-width="0.900"/></g>
<g fill="#dfe2e7"><path d="M1681.500 1016l3.200 9.500 4.300 5.500-1.300 1-4.400-4-1.800.2-1.800-.2-4.400 4-1.300-1 4.300-5.500z"/><path d="M1705.500 1016l3.200 9.500 4.300 5.500-1.300 1-4.400-4-1.800.2-1.800-.2-4.400 4-1.300-1 4.300-5.500z"/></g>
<circle cx="1688.500" cy="1019" r="2.200" fill="none" stroke="#dfe2e7" stroke-width="1.100"/><path d="M1712.500 1015l.9 2.300 2.300.9-2.300.9-.9 2.300-.9-2.300-2.300-.9 2.300-.9z" fill="#dfe2e7"/>
<g transform="translate(1732,1024.500)"><path d="M-1.500-8h3l.6 2.200 1.900.8 2-1.200 2.100 2.100-1.200 2 .8 1.900 2.200.6v3l-2.200.6-.8 1.900 1.200 2-2.100 2.100-2-1.200-1.900.8-.6 2.200h-3l-.6-2.200-1.900-.8-2 1.200-2.100-2.100 1.200-2-.8-1.900-2.200-.6v-3l2.200-.6.800-1.900-1.200-2 2.100-2.100 2 1.200 1.900-.8z" fill="#dfe2e7" transform="scale(0.880)"/><circle r="2.600" fill="#2d3541"/></g>
<g><rect x="1817.500" y="1020" width="13" height="9" fill="#f0b243"/><path d="M1820.500 1016v8M1817 1019.500h12" stroke="#8fd0f5" stroke-width="1.200"/><rect x="1819" y="1018" width="3" height="3" fill="#2d3541" stroke="#8fd0f5" stroke-width="0.900"/><path d="M1830 1024l4.500 8h-9z" fill="#f9d54e" stroke="#7a5a00" stroke-width="0.500"/>
<rect x="1842" y="1016.500" width="14" height="11" fill="#b9bdc5"/><path d="M1843 1025l3.500-6 3 4 2.500-3 3 5" stroke="#5a6270" stroke-width="1" fill="none"/><path d="M1853.500 1024l4.500 8h-9z" fill="#f7b26a" stroke="#7a4a00" stroke-width="0.500"/></g>
<g stroke="#e6e9ee" stroke-width="2.200"><path d="M1898 1018h15.500M1898 1024h15.500M1898 1030h15.500"/></g>
<!-- canvas tick marks -->
<g stroke-width="1"><path d="M1583.500 182v4M359.500 1002v5M1583.500 1002v5" stroke="#39d5e0"/><path d="M1756.500 182v6M184.500 1002v5M1756.500 1002v5" stroke="#222"/></g>
</svg>
<div class="t" style="left:58px;top:1017px">Model</div>
<div class="t" style="left:116px;top:1017px;font-weight:bold;color:#fff;letter-spacing:-0.3px">Layout1</div>
<div class="t" style="left:1434px;top:1018px;font-size:12px;letter-spacing:-0.4px">PAPER</div>
<div id="taskbar"></div>
<div class="abs" style="left:48px;top:1040px;width:288px;height:40px;background:#f1f1f1;border:1px solid #fafafa;border-bottom:none"></div>
<div class="t" style="left:88px;top:1052px;font-size:15.5px;line-height:18px;color:#2f2f2f">Ara</div>
<div class="abs" style="left:388px;top:1040px;width:44px;height:40px;background:#393939"></div>
<div class="abs" style="left:432px;top:1040px;width:2px;height:40px;background:#2b2b2b"></div>
<div class="abs" style="left:343px;top:1078px;width:40px;height:2px;background:#8cc4f0"></div>
<div class="abs" style="left:388px;top:1078px;width:46px;height:2px;background:#8cc4f0"></div>
<div class="abs" style="left:441px;top:1078px;width:40px;height:2px;background:#8cc4f0"></div>
<div class="abs" style="left:490px;top:1078px;width:40px;height:2px;background:#8cc4f0"></div>
<svg width="1920" height="1080" viewBox="0 0 1920 1080" style="pointer-events:none">
<g fill="#fff"><path d="M16 1054.200l6.500-.9v6.300H16zM23.300 1053.200l8.700-1.200v7.600h-8.700zM16 1060.400h6.500v6.300l-6.500-.9zM23.300 1060.400h8.700v7.600l-8.700-1.200z"/></g>
<circle cx="70" cy="1058" r="5" fill="none" stroke="#222" stroke-width="1.500"/><path d="M66.500 1061.500l-6 5.500" stroke="#222" stroke-width="1.800"/>
<!-- forest -->
<g>
 <path d="M262 1066l10-12 8 6 9-14 10 10 8-8 10 12 8-4 7 10z" fill="#b7bec9"/>
 <ellipse cx="297" cy="1070" rx="35" ry="6.500" fill="#6fc3b3"/>
 <ellipse cx="297" cy="1066.500" rx="34" ry="5" fill="#a99c3d"/>
 <ellipse cx="282" cy="1066" rx="10" ry="3" fill="#c2b04a"/><ellipse cx="312" cy="1066.500" rx="11" ry="3" fill="#c2b04a"/>
 <g fill="#1f6b4a"><path d="M270 1064l4-17 4 17zM277 1063l4.500-21 4.500 21zM285 1064l3-13 3 13zM293 1063l3.500-15 3.500 15zM303 1062l4-17 4 17zM309 1062l4.500-20 4.500 20zM318 1063l3.500-16 3.500 16zM325 1064l2.500-9 2.500 9z"/></g>
 <g fill="#2f8a5f"><path d="M272 1058l2-9 2 9zM279.500 1056l2-11 2 11zM305 1056l2-9 2 9zM311.500 1055l2-10 2 10z"/></g>
 <path d="M266 1072c10 3 50 3 62 0" stroke="#3f9d92" stroke-width="1.200" fill="none"/>
</g>
<!-- chrome -->
<g transform="translate(362.500,1060)">
 <circle r="12" fill="#e94235"/>
 <path d="M0 0L-10.400 6A12 12 0 0 1 -10.400 -6z" fill="#e94235"/>
 <path d="M-10.400 -6A12 12 0 0 1 10.400 -6L0 -6z" fill="#e94235"/>
 <path d="M10.400 -6A12 12 0 0 1 0 12L5.200 3z" fill="#fbbc05"/>
 <path d="M10.400 -6H0L5.200 3L0 12A12 12 0 0 0 10.400 -6z" fill="#fbbc05"/>
 <path d="M-10.400 -6L-5.200 3L0 12A12 12 0 0 1 -10.400 -6z" fill="#34a853"/>
 <path d="M-5.200 3L0 12L5.200 3z" fill="#34a853"/>
 <circle r="5.600" fill="#fff"/><circle r="4.400" fill="#4285f4"/>
</g>
<!-- autocad -->
<g><path d="M403 1048l17-1.500 2.300 21-5 4.500-16-2z" fill="#8e0f2d"/><path d="M403.500 1047.500l16.500-1.200 1.600 19.500-18.600 1.600z" fill="#e01f4f"/><path d="M402 1067.500l19.600-1.800.4 4.800-4 2-16-1.800z" fill="#a3122f"/></g>
<!-- paint -->
<g transform="translate(460.500,1060)">
 <path d="M-11 2C-12 -6 -4 -11 4 -9.500C11 -8 12.500 -1 9 2C6.500 4 4 2.500 2.500 4.500C1 7 3.500 9 1 10.500C-3 12 -10 9 -11 2z" fill="#dfe3ea" stroke="#8a93a3" stroke-width="1"/>
 <circle cx="-6" cy="-2" r="2" fill="#e94235"/><circle cx="-1.500" cy="-5.500" r="2" fill="#fbbc05"/><circle cx="4" cy="-4.500" r="2" fill="#34a853"/><circle cx="-6.500" cy="4" r="2" fill="#4285f4"/>
 <path d="M3 4L9.500 -11" stroke="#c98a3c" stroke-width="2.200"/><path d="M9 -10l1.800-4 1 .5-1.200 4.300z" fill="#e8c27a"/>
</g>
<!-- opera -->
<g transform="translate(509.800,1060)"><ellipse rx="11" ry="12" fill="#e81123"/><ellipse rx="5" ry="8.800" fill="#1c1c1c"/></g>
<!-- tray -->
<g fill="none" stroke="#fff" stroke-width="1.300">
 <path d="M1760 1063l5-5 5 5"/>
 <path d="M1783 1057.500h2.500l3.500-3v11l-3.500-3h-2.500z"/><path d="M1791.500 1057a4 4 0 0 1 0 6M1794 1055a7 7 0 0 1 0 10M1796.500 1053.200a10 10 0 0 1 0 13.600" stroke-width="1"/>
 <path d="M1879.500 1053.500h15v11h-5l-2.500 3v-3h-7.500z"/>
</g>
<rect x="1914.500" y="1044" width="1" height="32" fill="#5a5a5a"/>
</svg>
<div class="abs" style="left:406px;top:1049px;width:12px;height:13px;font:bold 12px/13px 'Liberation Sans',sans-serif;color:#fff;text-align:center">A</div>
<div class="abs" style="left:403px;top:1065px;width:18px;height:6px;font:bold 5px/6px 'Liberation Sans',sans-serif;color:#fff;text-align:center">CAD</div>
<div class="t tc" style="left:1833.500px;top:1044px;color:#fff;font-size:12px;letter-spacing:-0.3px">00:42</div>
<div class="t tc" style="left:1834.500px;top:1062px;color:#fff;font-size:12px;letter-spacing:-0.5px">16.04.2026</div>
</div></body></html>
